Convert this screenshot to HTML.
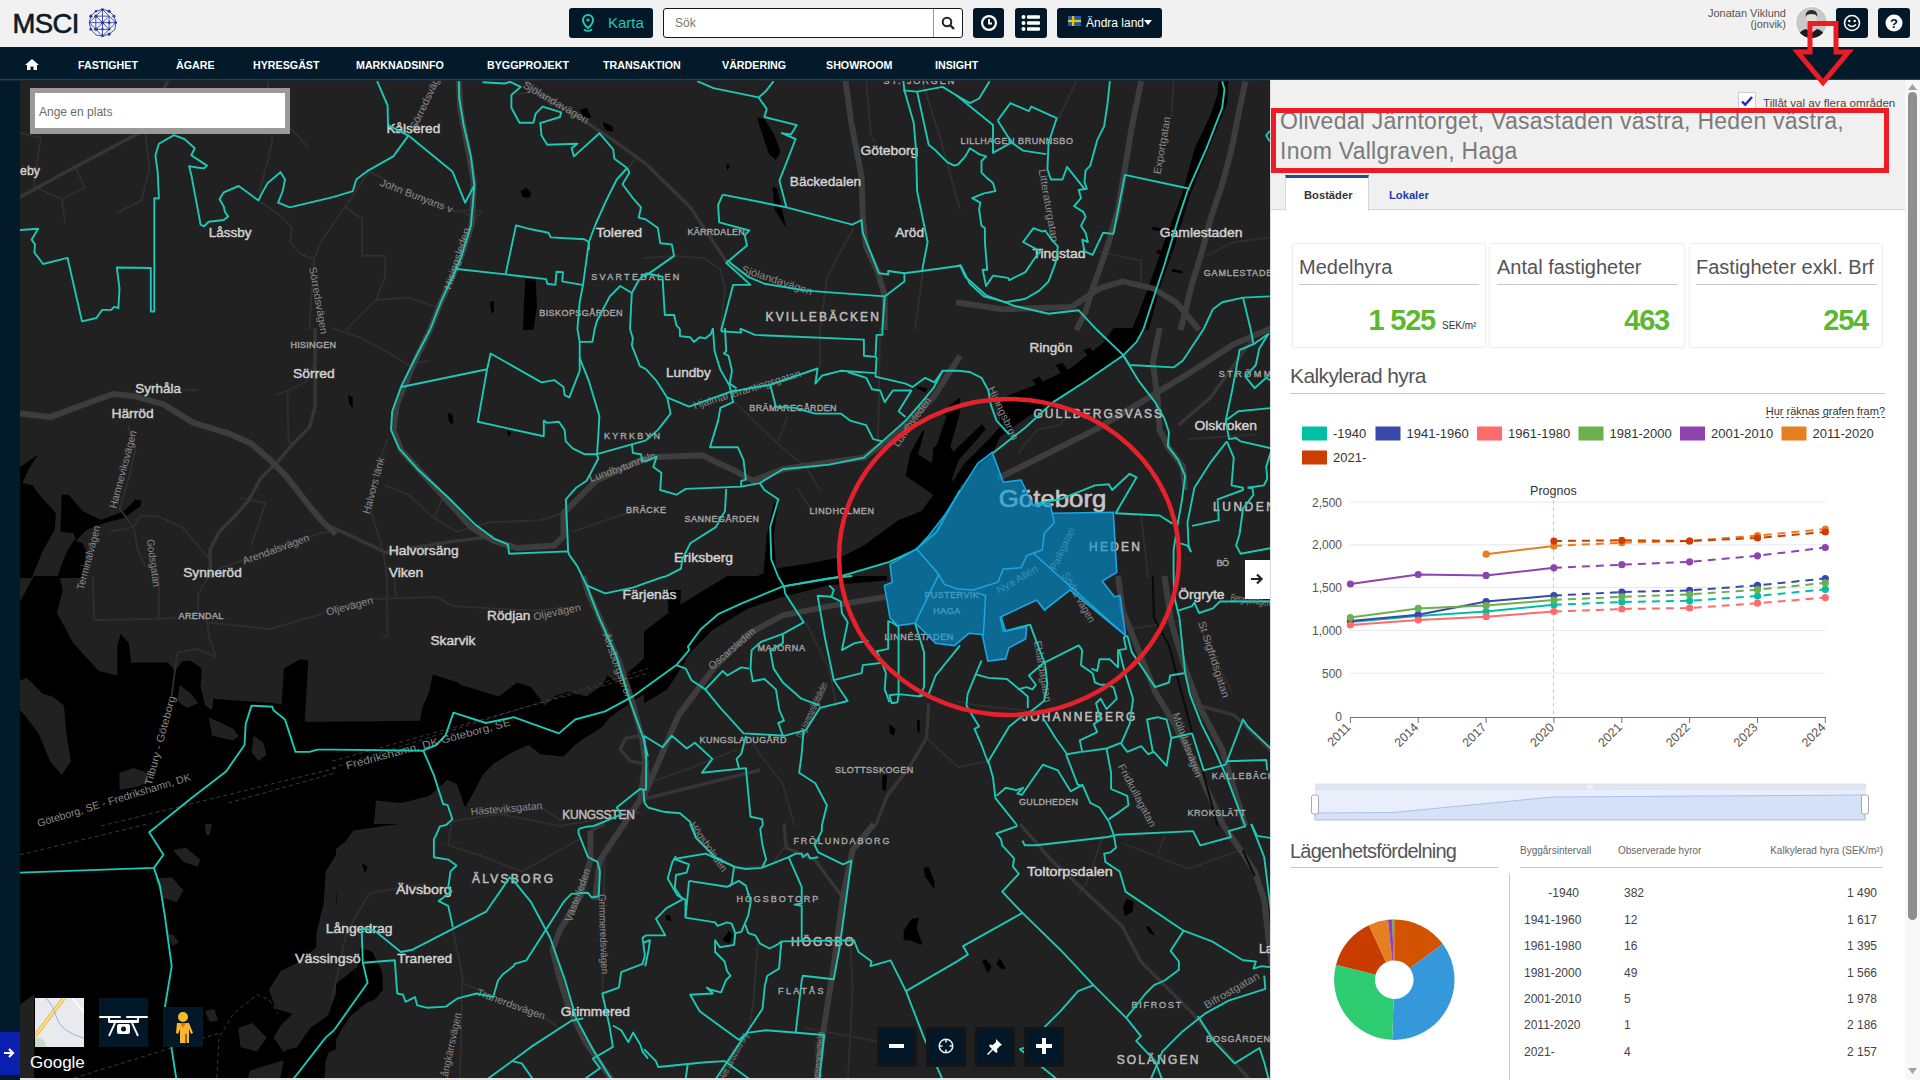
<!DOCTYPE html>
<html><head><meta charset="utf-8">
<style>
*{box-sizing:border-box;margin:0;padding:0}
html,body{width:1920px;height:1080px;overflow:hidden;background:#f1f1f1;font-family:"Liberation Sans",sans-serif}
#hdr{position:absolute;left:0;top:0;width:1920px;height:47px;background:#f1f1f1}
#nav{position:absolute;left:0;top:47px;width:1920px;height:33px;background:#021a2a;border-bottom:1px solid #3b3b3b}
#nav span{position:absolute;top:11.5px;color:#fff;font-weight:bold;font-size:10.7px;letter-spacing:0}
#strip{position:absolute;left:0;top:80px;width:20px;height:1000px;background:#021a2a}
#map{position:absolute;left:20px;top:80px;width:1250px;height:1000px;background:#212121;overflow:hidden}
#panel{position:absolute;left:1270px;top:80px;width:650px;height:1000px;background:#fff;overflow:hidden}
.abs{position:absolute}
.btn{position:absolute;background:#021828;border-radius:3px}

.card{background:#fff;box-shadow:0 0 2px rgba(0,0,0,0.25);border-radius:1px}
.ct{font-size:20px;color:#555}
.cv{font-size:29px;font-weight:bold;color:#5cb82e;letter-spacing:-1.2px}
.th{font-size:10px;color:#666}
.td{font-size:12px;color:#444}
</style></head><body>
<div id="hdr">
  <svg class="abs" style="left:0;top:0" width="130" height="47" viewBox="0 0 130 47"><text x="12.5" y="32.8" font-family="Liberation Sans" font-size="27.5" fill="#0e1a28" stroke="#0e1a28" stroke-width="0.6" textLength="67" lengthAdjust="spacing">MSCI</text>
</svg><svg class="abs" style="left:84px;top:4px" width="38" height="38" viewBox="0 0 1080 1080"><g fill="none" stroke="#3848a8" stroke-width="26" stroke-linejoin="round">
<polygon points="525,150 715,200 855,345 905,530 880,720 715,860 525,910 340,880 195,720 150,530 195,345 340,205"/>
<polygon points="525,155 905,530 525,910 150,530"/>
<path d="M525 155V910M150 530H905M335 345V720M715 345V720M335 345H715M335 720H715M340 345L715 720M715 345L340 720"/></g>
<g fill="#2a3a9c"><circle cx="525" cy="160" r="40"/><circle cx="340" cy="205" r="35"/><circle cx="715" cy="205" r="45"/><circle cx="195" cy="345" r="45"/><circle cx="340" cy="345" r="45"/><circle cx="850" cy="345" r="40"/><circle cx="525" cy="530" r="50"/><circle cx="715" cy="530" r="40"/><circle cx="900" cy="530" r="40"/><circle cx="195" cy="720" r="40"/><circle cx="340" cy="720" r="50"/><circle cx="525" cy="720" r="35"/><circle cx="715" cy="720" r="35"/><circle cx="715" cy="855" r="45"/><circle cx="525" cy="905" r="40"/></g></svg>
  <div class="btn" style="left:569px;top:8px;width:84px;height:30px"></div>
  <svg class="abs" style="left:582px;top:14px" width="12" height="19" viewBox="0 0 12 19"><path d="M6 1a5 5 0 0 0-5 5c0 4 5 8 5 8s5-4 5-8a5 5 0 0 0-5-5z" fill="none" stroke="#1ec8b4" stroke-width="2"/><circle cx="6" cy="6" r="1.6" fill="#1ec8b4"/><path d="M2 15.5q4 3 8 0" fill="none" stroke="#1ec8b4" stroke-width="1.6"/></svg>
  <div class="abs" style="left:608px;top:14px;font-size:15px;color:#1ec8b4">Karta</div>
  <div class="abs" style="left:663px;top:8px;width:300px;height:30px;background:#fff;border:1px solid #1a1a1a;border-radius:3px"></div>
  <div class="abs" style="left:933px;top:9px;width:1px;height:28px;background:#999"></div>
  <div class="abs" style="left:675px;top:16px;font-size:12px;color:#777">Sök</div>
  <svg class="abs" style="left:941px;top:16px" width="14" height="14" viewBox="0 0 14 14"><circle cx="6" cy="6" r="4.3" fill="none" stroke="#222" stroke-width="2"/><path d="M9 9l4 4" stroke="#222" stroke-width="2.4"/></svg>
  <div class="btn" style="left:973px;top:8px;width:31px;height:30px"></div>
  <svg class="abs" style="left:979px;top:13px" width="20" height="20" viewBox="0 0 20 20"><circle cx="10" cy="10" r="8" fill="#fff"/><circle cx="10" cy="10" r="5.8" fill="#021828"/><path d="M10 6v4.5h3" stroke="#fff" stroke-width="1.8" fill="none"/></svg>
  <div class="btn" style="left:1015px;top:8px;width:32px;height:30px"></div>
  <svg class="abs" style="left:1021px;top:14px" width="20" height="18" viewBox="0 0 20 18"><g fill="#fff"><circle cx="2.5" cy="3" r="2"/><circle cx="2.5" cy="9" r="2"/><circle cx="2.5" cy="15" r="2"/><rect x="6" y="1.3" width="13" height="3.4" rx="1"/><rect x="6" y="7.3" width="13" height="3.4" rx="1"/><rect x="6" y="13.3" width="13" height="3.4" rx="1"/></g></svg>
  <div class="btn" style="left:1057px;top:8px;width:105px;height:30px"></div>
  <svg class="abs" style="left:1068px;top:16px" width="13" height="10" viewBox="0 0 13 10"><rect width="13" height="10" fill="#1b5fa8"/><rect x="4" width="2.2" height="10" fill="#f5c400"/><rect y="3.9" width="13" height="2.2" fill="#f5c400"/></svg>
  <div class="abs" style="left:1086px;top:16px;font-size:12px;color:#fff">Ändra land</div>
  <svg class="abs" style="left:1144px;top:20px" width="8" height="5" viewBox="0 0 8 5"><path d="M0 0h8L4 5z" fill="#fff"/></svg>
  <div class="abs" style="left:1600px;top:8px;width:186px;text-align:right;font-size:11px;color:#555;line-height:11px">Jonatan Viklund<br>(jonvik)</div>
  <svg class="abs" style="left:1794px;top:5px" width="35" height="35" viewBox="0 0 35 35"><defs><clipPath id="avc"><circle cx="17.5" cy="17.5" r="15.5"/></clipPath></defs><circle cx="17.5" cy="17.5" r="17" fill="#fafafa"/><g clip-path="url(#avc)"><rect width="35" height="35" fill="#c9c9c9"/><ellipse cx="17.5" cy="14" rx="5.5" ry="7" fill="#e0dcd8"/><path d="M11.5 12q0-7 6-7t6 7q-1-3-6-3t-6 3z" fill="#2a2a2a"/><path d="M3 35q2-10 9-11l5.5 4 5.5-4q7 1 9 11z" fill="#1c1c1c"/><path d="M15 24l2.5 5 2.5-5z" fill="#f0f0f0"/></g></svg>
  <div class="btn" style="left:1836px;top:8px;width:32px;height:30px"></div>
  <svg class="abs" style="left:1843px;top:14px" width="18" height="18" viewBox="0 0 18 18"><circle cx="9" cy="9" r="7.5" fill="none" stroke="#fff" stroke-width="1.6"/><circle cx="6.3" cy="7" r="1.2" fill="#fff"/><circle cx="11.7" cy="7" r="1.2" fill="#fff"/><path d="M5 10.5q4 4 8 0" fill="none" stroke="#fff" stroke-width="1.5"/></svg>
  <div class="btn" style="left:1878px;top:8px;width:32px;height:30px"></div>
  <svg class="abs" style="left:1885px;top:14px" width="18" height="18" viewBox="0 0 18 18"><circle cx="9" cy="9" r="8.5" fill="#fff"/><text x="9" y="14" font-family="Liberation Sans" font-weight="bold" font-size="13" text-anchor="middle" fill="#021828">?</text></svg>
</div>
<div id="nav">
  <svg class="abs" style="left:25px;top:12px" width="14" height="11" viewBox="0 0 14 11"><path d="M7 0L0 6h2v5h3.5V7.5h3V11H12V6h2z" fill="#fff"/></svg>
  <span style="left:78px">FASTIGHET</span>
  <span style="left:176px">ÄGARE</span>
  <span style="left:253px">HYRESGÄST</span>
  <span style="left:356px">MARKNADSINFO</span>
  <span style="left:487px">BYGGPROJEKT</span>
  <span style="left:603px">TRANSAKTION</span>
  <span style="left:722px">VÄRDERING</span>
  <span style="left:826px">SHOWROOM</span>
  <span style="left:935px">INSIGHT</span>
</div>
<div id="strip"></div>
<div class="abs" style="left:0;top:80px;width:1270px;height:1px;background:#1c2832;z-index:5"></div>
<div class="abs" style="left:0;top:1032px;width:20px;height:43px;background:#0a1fb0"></div>
<svg class="abs" style="left:3px;top:1047px" width="13" height="12" viewBox="0 0 13 12"><path d="M1 6h9M6 2l4 4-4 4" fill="none" stroke="#fff" stroke-width="2.2"/></svg>
<div id="map">
<svg class="abs" style="left:0;top:0" width="1250" height="1000" viewBox="0 0 1250 1000">
<rect width="1250" height="1000" fill="#212121"/>
<polygon points="500.7,111.1 506.4,107.6 511.5,113.4 508.8,118.1 502.3,116.9" fill="#000"/>
<polygon points="505.3,199.1 515.7,199.1 516.9,226.9 513.4,250.0 503.0,250.0 504.1,222.2" fill="#000"/>
<polygon points="469.4,222.2 474.0,221.1 474.0,231.5 471.7,233.8" fill="#000"/>
<polygon points="559.7,30.1 566.6,27.8 571.3,37.0 564.3,39.4" fill="#000"/>
<polygon points="582.8,41.7 592.1,46.3 593.2,52.1 585.1,49.8" fill="#000"/>
<polygon points="737.4,37.0 744.4,39.4 753.6,53.2 760.6,71.8 755.9,79.9 749.0,74.1 739.7,46.3" fill="#000"/>
<polygon points="706.2,84.5 710.1,85.2 707.3,90.7" fill="#000"/>
<polygon points="752.5,106.5 757.1,108.8 766.4,148.1 760.6,138.9 754.8,129.6" fill="#000"/>
<polygon points="1198.7,1.2 1208.0,1.2 1207.3,23.1 1188.3,69.4 1169.8,115.7 1155.9,162.0 1139.7,208.3 1128.6,250.0 1111.9,250.0 1128.1,208.3 1144.3,162.0 1161.7,115.7 1174.4,69.4 1190.6,34.7 1197.6,13.9" fill="#000"/>
<polygon points="1132.8,147.0 1140.9,148.1 1140.2,150.9 1132.3,150.0" fill="#000"/>
<polygon points="1136.9,170.1 1145.5,171.8 1144.8,174.8 1136.5,173.6" fill="#000"/>
<polygon points="1152.4,188.7 1162.4,191.0 1161.7,193.3 1151.7,191.7" fill="#000"/>
<polygon points="0.0,386.9 18.5,374.2 9.3,388.0 2.3,403.1 12.7,405.4 17.4,412.4 35.9,433.2 34.7,449.4 23.1,470.2 11.6,498.0 0.0,498.0" fill="#000"/>
<polygon points="41.7,414.7 48.6,414.7 62.5,430.9 81.0,440.1 104.2,430.9 115.7,419.3 121.5,420.5 120.4,426.2 104.2,437.8 83.3,443.6 67.1,449.4 55.6,461.0 62.5,463.3 66.0,470.2 62.5,498.0 37.0,498.0 41.7,484.1 48.6,467.9 55.6,458.6 53.2,452.9 40.5,451.7" fill="#000"/>
<polygon points="328.2,315.1 332.8,317.4 332.8,327.9 329.4,324.4" fill="#000"/>
<polygon points="427.7,332.5 432.4,334.8 433.5,345.2 428.9,341.8" fill="#000"/>
<polygon points="486.8,351.0 491.4,352.2 489.1,357.3" fill="#000"/>
<polygon points="732.8,498.0 753.6,488.7 786.0,484.1 820.8,477.2 843.9,465.6 878.6,440.1 901.8,430.9 913.4,414.7 885.6,396.1 890.2,373.0 901.8,352.2 922.6,331.3 940.0,317.4 940.0,410.0 916.8,451.7 894.8,470.2 869.4,481.8 820.8,498.0" fill="#000"/>
<polygon points="753.6,423.9 758.3,420.5 753.6,456.3 757.1,498.0 743.2,498.0 746.7,456.3" fill="#000"/>
<polygon points="893.7,305.9 907.6,308.2 905.2,312.8" fill="#000"/>
<polygon points="936.0,336.0 959.1,329.0 989.2,315.1 1019.3,303.6 1051.7,287.4 1084.1,261.9 1093.4,248.0 1125.8,248.0 1116.6,264.2 1102.7,275.8 1074.9,294.3 1040.2,317.4 1005.4,338.3 980.0,356.8 973.0,373.0 936.0,410.0" fill="#000"/>
<polygon points="1012.4,300.1 1019.3,296.6 1027.4,308.2 1021.6,311.7" fill="#000"/>
<polygon points="1035.5,285.0 1042.5,282.7 1051.7,296.6 1044.8,298.9" fill="#000"/>
<polygon points="1063.3,270.0 1070.3,267.7 1078.4,279.2 1072.6,281.6" fill="#000"/>
<polygon points="0.0,521.5 13.9,496.0 39.4,496.0 42.8,509.9 37.0,533.0 53.2,563.1 78.7,590.9 97.2,595.5 97.2,565.4 100.7,553.9 108.8,563.1 111.1,582.8 148.1,582.8 155.1,590.9 162.0,581.6 170.1,580.5 181.7,588.6 180.6,607.1 185.2,625.6 192.1,630.3 193.3,618.7 254.6,623.3 261.6,624.5 263.9,588.6 280.1,579.3 288.2,580.5 284.7,641.8 316.0,641.8 316.0,746.0 0.0,746.0" fill="#000"/>
<polygon points="312.0,641.8 400.0,640.7 402.3,627.9 409.2,611.7 412.7,594.4 438.2,602.5 440.5,604.8 478.7,616.4 497.2,602.5 511.1,607.1 525.0,625.6 534.2,616.4 548.1,611.7 566.6,616.4 582.8,604.8 587.5,595.5 596.7,602.5 612.9,588.6 628.0,574.7 628.0,611.7 612.9,621.0 589.8,637.2 582.8,646.5 557.4,662.7 543.5,676.6 520.3,674.2 508.8,665.0 492.6,671.9 474.0,683.5 462.5,695.1 455.5,709.0 445.1,727.5 437.0,704.3 427.7,699.7 409.2,715.9 381.4,722.9 356.0,720.5 353.7,746.0 312.0,746.0" fill="#000"/>
<polygon points="624.0,551.6 654.1,528.4 684.2,509.9 707.3,496.0 867.1,496.0 867.1,500.6 809.2,505.3 762.9,516.8 728.2,528.4 693.4,549.2 670.3,572.4 656.4,595.5 647.1,609.4 624.0,623.3" fill="#000"/>
<polygon points="647.1,509.9 661.0,509.9 658.7,551.6 649.5,551.6" fill="#000"/>
<polygon points="869.4,644.1 875.2,648.8 874.0,655.7 869.8,653.4" fill="#000"/>
<polygon points="862.4,695.1 867.1,695.1 865.9,711.3 862.0,709.0" fill="#000"/>
<polygon points="897.1,639.5 899.9,640.7 899.5,653.4 897.1,651.1" fill="#000"/>
<polygon points="0.0,744.0 316.0,744.0 316.0,1000.0 0.0,1000.0" fill="#000"/>
<polygon points="312.0,744.0 378.4,744.0 333.3,750.6 325.0,761.8 312.0,772.4" fill="#000"/>
<polygon points="312.0,805.6 316.7,815.1 315.6,838.8 312.0,841.2" fill="#000"/>
<polygon points="340.4,867.3 352.3,872.0 361.8,891.0 363.0,910.0 354.7,919.4 342.8,924.2 326.2,933.7 312.0,952.6 312.0,907.6 326.2,895.7 338.1,886.2" fill="#000"/>
<polygon points="341.6,783.1 347.6,786.7 345.2,793.8" fill="#000"/>
<polygon points="903.8,787.9 908.5,786.7 914.4,800.9 914.4,809.2 904.9,796.2" fill="#000"/>
<polygon points="883.6,850.7 891.9,838.8 899.0,837.6 896.6,848.3 902.6,864.9 889.5,860.2 883.6,860.2" fill="#000"/>
<polygon points="645.3,835.3 650.1,835.3 651.3,841.2 646.5,840.0" fill="#000"/>
<polygon points="702.2,860.2 709.3,850.7 712.9,855.4 709.3,863.7" fill="#000"/>
<polygon points="1103.1,827.0 1106.7,818.7 1113.8,822.2 1112.6,831.7 1104.8,836.5" fill="#000"/>
<polygon points="1125.7,845.9 1129.2,846.4 1135.1,855.4 1129.2,853.1" fill="#000"/>
<polygon points="962.1,881.5 965.6,879.1 971.6,886.2 968.0,893.4" fill="#000"/>
<polygon points="976.3,883.9 979.9,877.9 985.8,888.6 982.2,889.8" fill="#000"/>
<polygon points="0.0,600.2 6.9,597.9 23.1,614.1 32.4,616.4 44.0,625.6 46.3,653.4 50.9,681.2 41.7,695.1 30.1,681.2 18.5,653.4 4.6,634.9 0.0,630.3" fill="#212121"/>
<polygon points="159.7,604.8 171.3,614.1 178.2,623.3 166.7,627.9 157.4,621.0" fill="#212121"/>
<polygon points="188.7,637.2 196.8,640.7 213.0,648.8 218.7,655.7 213.0,660.4 192.1,655.7" fill="#212121"/>
<polygon points="233.8,655.7 243.1,662.7 246.5,674.2 238.4,681.2 231.5,671.9" fill="#212121"/>
<polygon points="99.5,692.8 113.4,688.1 127.3,692.8 128.5,702.0 118.1,706.6 99.5,710.1" fill="#212121"/>
<polygon points="152.9,770.1 166.0,767.7 180.2,779.6 177.8,786.7 163.6,781.9" fill="#212121"/>
<polygon points="135.1,798.5 151.7,797.3 163.6,810.4 156.5,822.2 142.2,817.5" fill="#212121"/>
<polygon points="147.0,853.1 154.1,855.4 158.8,862.5 152.9,866.1" fill="#212121"/>
<polygon points="184.9,931.3 194.4,928.9 198.0,940.8 189.7,942.0" fill="#212121"/>
<polygon points="218.1,947.9 232.3,943.1 246.6,957.4 237.1,971.6 220.5,966.9" fill="#212121"/>
<polygon points="184.9,744.0 192.0,744.0 189.7,754.7 186.1,754.7" fill="#212121"/>
<polygon points="316.0,774.8 305.8,791.4 303.5,824.6 296.3,853.1 296.3,867.3 279.8,881.5 260.8,891.0 248.9,910.0 256.0,928.9 272.6,933.7 260.8,945.5 253.7,957.4 263.2,971.6 282.1,974.0 296.3,957.4 308.2,952.6 316.0,945.5" fill="#212121"/>
<polygon points="230.0,990.6 260.8,981.1 284.5,983.4 316.0,969.2 316.0,1000.0 227.6,1000.0" fill="#212121"/>
<polygon points="0.0,924.2 14.2,914.7 14.2,1000.0 0.0,1000.0" fill="#212121"/>
<polygon points="910.0,330.2 926.7,335.7 916.5,365.4 913.2,368.1 911.9,383.0 898.0,374.6" fill="#212121"/>
<polygon points="940.6,330.2 940.6,320.0 980.0,320.0 980.0,346.9 969.3,358.9 943.3,384.8 933.1,401.5 931.8,399.6 938.7,380.2 965.6,349.6 961.9,344.1 933.1,371.9 930.4,366.3" fill="#212121"/>
<polygon points="317.4,910.0 307.9,935.7 290.3,947.9 276.8,967.5 266.0,970.0 260.0,1000.0 304.0,1000.0 305.9,980.0 310.6,967.5 329.6,937.0 360.7,910.0 363.0,895.0 340.0,910.0" fill="#000"/>
<polyline points="13.9,106.5 41.7,119.2 45.1,143.5" fill="none" stroke="#2f2f2f" stroke-width="1.8" stroke-linejoin="round"/>
<polyline points="55.6,88.0 64.8,107.6 41.7,119.2" fill="none" stroke="#2f2f2f" stroke-width="1.8" stroke-linejoin="round"/>
<polyline points="93.8,134.3 121.5,120.4 129.6,88.0 125.0,49.8" fill="none" stroke="#2f2f2f" stroke-width="1.8" stroke-linejoin="round"/>
<polyline points="247.7,0.0 252.3,60.2 248.8,76.4 240.7,106.5 239.6,121.5 261.6,136.6 272.0,148.1 269.7,162.0 280.1,173.6 294.0,179.4 300.9,162.0 314.0,142.4" fill="none" stroke="#2f2f2f" stroke-width="1.8" stroke-linejoin="round"/>
<polyline points="294.0,179.4 289.4,250.0" fill="none" stroke="#2f2f2f" stroke-width="1.8" stroke-linejoin="round"/>
<polyline points="270.8,48.6 288.2,67.1" fill="none" stroke="#2f2f2f" stroke-width="1.8" stroke-linejoin="round"/>
<polyline points="0.0,53.2 20.8,57.9 13.9,106.5" fill="none" stroke="#2f2f2f" stroke-width="1.8" stroke-linejoin="round"/>
<polyline points="349.0,91.4 381.4,108.8 437.0,131.9 450.9,129.6 462.5,131.9 453.2,138.9 441.6,129.6" fill="none" stroke="#2f2f2f" stroke-width="1.8" stroke-linejoin="round"/>
<polyline points="314.0,142.4 332.8,115.7 349.0,91.4" fill="none" stroke="#2f2f2f" stroke-width="1.8" stroke-linejoin="round"/>
<polyline points="418.5,0.0 400.0,39.4 381.4,64.8" fill="none" stroke="#2f2f2f" stroke-width="1.8" stroke-linejoin="round"/>
<polyline points="325.9,127.3 342.1,138.9 342.1,175.9 365.2,175.9 365.2,196.8 356.0,219.9 325.9,250.0" fill="none" stroke="#2f2f2f" stroke-width="1.8" stroke-linejoin="round"/>
<polyline points="356.0,219.9 388.4,217.6 416.2,226.9 432.4,196.8" fill="none" stroke="#2f2f2f" stroke-width="1.8" stroke-linejoin="round"/>
<polyline points="615.2,78.7 601.4,97.2" fill="none" stroke="#2f2f2f" stroke-width="1.8" stroke-linejoin="round"/>
<polyline points="497.2,13.9 515.7,11.6 531.9,25.5" fill="none" stroke="#2f2f2f" stroke-width="1.8" stroke-linejoin="round"/>
<polyline points="833.5,148.1 818.4,175.9 806.9,199.1 799.9,249.0" fill="none" stroke="#2f2f2f" stroke-width="1.8" stroke-linejoin="round"/>
<polyline points="902.9,192.1 894.8,250.0" fill="none" stroke="#2f2f2f" stroke-width="1.8" stroke-linejoin="round"/>
<polyline points="624.0,178.2 654.1,175.9 684.2,178.2 700.4,189.8 705.0,208.3 700.4,250.0" fill="none" stroke="#2f2f2f" stroke-width="1.8" stroke-linejoin="round"/>
<polyline points="846.2,0.0 850.9,55.6 855.5,62.5" fill="none" stroke="#2f2f2f" stroke-width="1.8" stroke-linejoin="round"/>
<polyline points="901.8,0.0 920.3,57.9 940.0,129.6" fill="none" stroke="#2f2f2f" stroke-width="1.8" stroke-linejoin="round"/>
<polyline points="1056.4,1.2 1037.9,39.4" fill="none" stroke="#2f2f2f" stroke-width="1.8" stroke-linejoin="round"/>
<polyline points="1153.6,1.2 1151.3,37.0" fill="none" stroke="#2f2f2f" stroke-width="1.8" stroke-linejoin="round"/>
<polyline points="1079.5,171.3 1098.0,175.9 1121.2,180.6 1121.2,203.7" fill="none" stroke="#2f2f2f" stroke-width="1.8" stroke-linejoin="round"/>
<polyline points="1181.4,178.2 1213.8,162.0 1249.7,157.4" fill="none" stroke="#2f2f2f" stroke-width="1.8" stroke-linejoin="round"/>
<polyline points="107.6,345.2 115.7,368.4 108.8,398.5 99.5,428.6 113.4,447.1 118.1,470.2 125.0,486.4" fill="none" stroke="#2f2f2f" stroke-width="1.8" stroke-linejoin="round"/>
<polyline points="90.3,451.7 113.4,447.1 120.4,435.5 138.9,436.7 162.0,447.1 189.8,479.5" fill="none" stroke="#2f2f2f" stroke-width="1.8" stroke-linejoin="round"/>
<polyline points="254.6,315.1 268.5,310.5 287.0,301.2 294.0,282.7" fill="none" stroke="#2f2f2f" stroke-width="1.8" stroke-linejoin="round"/>
<polyline points="267.4,310.5 268.5,361.4 273.1,363.7" fill="none" stroke="#2f2f2f" stroke-width="1.8" stroke-linejoin="round"/>
<polyline points="219.9,418.1 245.4,422.8 231.5,465.6" fill="none" stroke="#2f2f2f" stroke-width="1.8" stroke-linejoin="round"/>
<polyline points="199.1,488.7 300.9,452.9 316.0,451.7" fill="none" stroke="#2f2f2f" stroke-width="1.8" stroke-linejoin="round"/>
<polyline points="162.0,310.5 178.2,310.0" fill="none" stroke="#2f2f2f" stroke-width="1.8" stroke-linejoin="round"/>
<polyline points="312.0,248.0 339.8,257.3 369.9,273.5 388.4,285.0 409.2,280.4" fill="none" stroke="#2f2f2f" stroke-width="1.8" stroke-linejoin="round"/>
<polyline points="367.6,359.1 353.7,398.5 351.4,433.2 362.9,470.2 367.0,497.0" fill="none" stroke="#2f2f2f" stroke-width="1.8" stroke-linejoin="round"/>
<polyline points="365.2,405.4 388.4,414.7 413.9,437.8" fill="none" stroke="#2f2f2f" stroke-width="1.8" stroke-linejoin="round"/>
<polyline points="423.1,417.0 413.9,437.8 437.0,451.7 469.4,442.4 520.3,440.1 543.5,433.2" fill="none" stroke="#2f2f2f" stroke-width="1.8" stroke-linejoin="round"/>
<polyline points="552.7,451.7 599.0,435.5 628.0,428.6" fill="none" stroke="#2f2f2f" stroke-width="1.8" stroke-linejoin="round"/>
<polyline points="709.6,317.4 762.9,368.4 786.0,386.9 799.9,410.0" fill="none" stroke="#2f2f2f" stroke-width="1.8" stroke-linejoin="round"/>
<polyline points="767.5,336.0 758.3,361.4" fill="none" stroke="#2f2f2f" stroke-width="1.8" stroke-linejoin="round"/>
<polyline points="799.9,249.0 799.9,287.4" fill="none" stroke="#2f2f2f" stroke-width="1.8" stroke-linejoin="round"/>
<polyline points="776.8,407.7 790.7,428.6 809.2,433.2" fill="none" stroke="#2f2f2f" stroke-width="1.8" stroke-linejoin="round"/>
<polyline points="860.1,248.0 857.8,373.0" fill="none" stroke="#2f2f2f" stroke-width="1.8" stroke-linejoin="round"/>
<polyline points="998.5,373.0 1017.0,349.9 1040.2,345.2 1051.7,329.0" fill="none" stroke="#2f2f2f" stroke-width="1.8" stroke-linejoin="round"/>
<polyline points="1121.2,435.5 1128.1,498.0" fill="none" stroke="#2f2f2f" stroke-width="1.8" stroke-linejoin="round"/>
<polyline points="1167.5,359.1 1236.9,354.5" fill="none" stroke="#2f2f2f" stroke-width="1.8" stroke-linejoin="round"/>
<polyline points="72.9,496.0 74.1,540.0 138.9,538.8 157.4,537.7" fill="none" stroke="#2f2f2f" stroke-width="1.8" stroke-linejoin="round"/>
<polyline points="138.9,496.0 138.9,537.7" fill="none" stroke="#2f2f2f" stroke-width="1.8" stroke-linejoin="round"/>
<polyline points="188.7,496.0 178.2,514.5 178.2,533.0 187.5,542.3 250.0,549.2 300.9,534.2 314.0,528.4" fill="none" stroke="#2f2f2f" stroke-width="1.8" stroke-linejoin="round"/>
<polyline points="187.5,542.3 188.7,556.2 192.1,565.4 195.6,577.0" fill="none" stroke="#2f2f2f" stroke-width="1.8" stroke-linejoin="round"/>
<polyline points="157.4,572.4 178.2,568.9 195.6,577.0" fill="none" stroke="#2f2f2f" stroke-width="1.8" stroke-linejoin="round"/>
<polyline points="157.4,572.4 151.6,616.4" fill="none" stroke="#2f2f2f" stroke-width="1.8" stroke-linejoin="round"/>
<polyline points="314.0,528.4 351.4,519.1 416.2,516.8 432.4,526.1 513.4,530.7 562.0,526.1" fill="none" stroke="#2f2f2f" stroke-width="1.8" stroke-linejoin="round"/>
<polyline points="367.0,497.0 367.6,556.2 361.8,557.3" fill="none" stroke="#2f2f2f" stroke-width="1.8" stroke-linejoin="round"/>
<polyline points="374.5,496.0 375.7,516.8" fill="none" stroke="#2f2f2f" stroke-width="1.8" stroke-linejoin="round"/>
<polyline points="431.5,741.5 520.3,727.5 543.5,741.4" fill="none" stroke="#2f2f2f" stroke-width="1.8" stroke-linejoin="round"/>
<polyline points="786.0,542.3 809.2,588.6 816.1,625.6" fill="none" stroke="#2f2f2f" stroke-width="1.8" stroke-linejoin="round"/>
<polyline points="624.0,704.3 670.3,688.1 716.6,669.6" fill="none" stroke="#2f2f2f" stroke-width="1.8" stroke-linejoin="round"/>
<polyline points="728.2,658.0 762.9,704.3 774.5,746.0" fill="none" stroke="#2f2f2f" stroke-width="1.8" stroke-linejoin="round"/>
<polyline points="906.4,658.0 938.0,687.0" fill="none" stroke="#2f2f2f" stroke-width="1.8" stroke-linejoin="round"/>
<polyline points="1107.3,549.2 1139.7,544.6 1165.2,540.0" fill="none" stroke="#2f2f2f" stroke-width="1.8" stroke-linejoin="round"/>
<polyline points="1211.5,611.7 1202.2,593.2 1190.6,565.4 1176.7,542.3" fill="none" stroke="#2f2f2f" stroke-width="1.8" stroke-linejoin="round"/>
<polyline points="938.0,687.0 968.4,681.2" fill="none" stroke="#2f2f2f" stroke-width="1.8" stroke-linejoin="round"/>
<polyline points="936.0,621.0 959.1,625.6 1005.4,630.3" fill="none" stroke="#2f2f2f" stroke-width="1.8" stroke-linejoin="round"/>
<polyline points="431.5,741.5 428.2,765.3 459.0,774.8 482.7,784.3 501.7,791.4 560.9,758.2" fill="none" stroke="#2f2f2f" stroke-width="1.8" stroke-linejoin="round"/>
<polyline points="430.5,838.8 442.4,895.7 440.0,1000.0" fill="none" stroke="#2f2f2f" stroke-width="1.8" stroke-linejoin="round"/>
<polyline points="442.4,902.8 525.4,938.4 539.6,947.9 551.4,940.8" fill="none" stroke="#2f2f2f" stroke-width="1.8" stroke-linejoin="round"/>
<polyline points="584.6,779.6 582.3,921.8" fill="none" stroke="#2f2f2f" stroke-width="1.8" stroke-linejoin="round"/>
<polyline points="312.0,919.4 326.2,853.1 349.9,812.8 406.8,803.3" fill="none" stroke="#2f2f2f" stroke-width="1.8" stroke-linejoin="round"/>
<polyline points="714.1,789.0 752.0,784.3 763.9,767.7" fill="none" stroke="#2f2f2f" stroke-width="1.8" stroke-linejoin="round"/>
<polyline points="737.8,862.5 733.1,924.2 728.3,952.6" fill="none" stroke="#2f2f2f" stroke-width="1.8" stroke-linejoin="round"/>
<polyline points="830.3,862.5 832.6,910.0 827.9,1000.0" fill="none" stroke="#2f2f2f" stroke-width="1.8" stroke-linejoin="round"/>
<polyline points="785.2,947.9 861.1,962.1 894.3,971.6" fill="none" stroke="#2f2f2f" stroke-width="1.8" stroke-linejoin="round"/>
<polyline points="1083.0,755.9 1066.4,803.3 1059.3,812.8" fill="none" stroke="#2f2f2f" stroke-width="1.8" stroke-linejoin="round"/>
<polyline points="1102.0,763.0 1168.3,789.0 1220.5,770.1" fill="none" stroke="#2f2f2f" stroke-width="1.8" stroke-linejoin="round"/>
<polyline points="1144.6,755.9 1137.5,774.8" fill="none" stroke="#2f2f2f" stroke-width="1.8" stroke-linejoin="round"/>
<polyline points="460.0,730.0 540.0,746.0 620.0,732.0" fill="none" stroke="#2f2f2f" stroke-width="1.8" stroke-linejoin="round"/>
<polyline points="0.0,116.9 55.6,86.8 125.0,49.8 148.1,0.0" fill="none" stroke="#363636" stroke-width="3.4" stroke-linejoin="round"/>
<polyline points="504.1,0.0 520.3,13.9 562.0,39.4 589.8,57.9 626.0,83.9" fill="none" stroke="#363636" stroke-width="3.4" stroke-linejoin="round"/>
<polyline points="626.0,83.9 670.3,127.3 707.3,182.9 723.5,196.8" fill="none" stroke="#363636" stroke-width="3.4" stroke-linejoin="round"/>
<polyline points="295.1,248.0 295.1,326.7 289.4,347.5 273.1,363.7 256.9,382.3 240.7,398.5 229.2,419.3 217.6,433.2 199.1,451.7 189.8,470.2 191.0,498.0" fill="none" stroke="#363636" stroke-width="3.4" stroke-linejoin="round"/>
<polyline points="312.0,447.1 346.7,463.3 365.2,472.5 427.7,462.1 474.0,456.3" fill="none" stroke="#363636" stroke-width="3.4" stroke-linejoin="round"/>
<polyline points="1158.2,345.2 1190.6,317.4 1232.3,259.6" fill="none" stroke="#363636" stroke-width="3.4" stroke-linejoin="round"/>
<polyline points="622.2,655.7 606.0,658.0 600.2,669.6 610.6,681.2 622.2,683.5" fill="none" stroke="#363636" stroke-width="3.4" stroke-linejoin="round"/>
<polyline points="908.7,623.3 906.4,658.0 890.2,685.8 867.1,715.9 855.5,746.0" fill="none" stroke="#363636" stroke-width="3.4" stroke-linejoin="round"/>
<polyline points="1179.1,625.6 1213.8,634.9 1252.0,671.9" fill="none" stroke="#363636" stroke-width="3.4" stroke-linejoin="round"/>
<polyline points="570.4,751.1 584.6,744.0" fill="none" stroke="#363636" stroke-width="3.4" stroke-linejoin="round"/>
<polyline points="763.9,744.0 766.2,767.7 794.7,779.6 820.8,815.1" fill="none" stroke="#363636" stroke-width="3.4" stroke-linejoin="round"/>
<polyline points="1000.0,744.0 1030.8,779.6 1068.8,815.1 1102.0,845.9 1120.9,881.5 1173.1,933.7 1196.8,962.1 1230.0,1000.0" fill="none" stroke="#363636" stroke-width="3.4" stroke-linejoin="round"/>
<polyline points="620.0,720.0 680.0,705.0 740.0,690.0" fill="none" stroke="#363636" stroke-width="3.4" stroke-linejoin="round"/>
<polyline points="438.9,0.0 440.5,30.1 448.6,71.8 453.7,101.9 452.0,143.5 441.6,175.9 432.4,196.8 420.8,222.2 410.4,249.0" fill="none" stroke="#3d3d3d" stroke-width="6" stroke-linejoin="round"/>
<polyline points="825.4,0.0 831.2,41.7 841.6,97.2 842.8,138.9 846.2,166.7 857.8,192.1 864.7,215.3 864.7,250.0" fill="none" stroke="#3d3d3d" stroke-width="6" stroke-linejoin="round"/>
<polyline points="1121.2,1.2 1111.9,46.3 1105.0,88.0 1098.0,129.6 1088.8,162.0 1079.5,189.8 1072.6,208.3 1065.6,231.5 1056.4,250.0" fill="none" stroke="#3d3d3d" stroke-width="6" stroke-linejoin="round"/>
<polyline points="1225.4,1.2 1218.4,34.7 1211.5,69.4 1202.2,104.2 1190.6,138.9 1181.4,173.6 1172.1,203.7 1165.2,231.5 1160.5,250.0" fill="none" stroke="#3d3d3d" stroke-width="6" stroke-linejoin="round"/>
<polyline points="936.0,222.2 982.3,229.2 1051.7,226.9 1079.5,208.3 1102.7,201.4 1132.8,208.3 1155.9,222.2 1179.1,250.0" fill="none" stroke="#3d3d3d" stroke-width="6" stroke-linejoin="round"/>
<polyline points="0.0,333.6 30.1,337.1 57.9,326.7 92.6,314.0 115.7,316.3 143.5,324.4 173.6,342.9 208.3,353.3 231.5,363.7 250.0,379.9 266.2,396.1 289.4,426.2 303.2,442.4 316.0,454.0" fill="none" stroke="#3d3d3d" stroke-width="6" stroke-linejoin="round"/>
<polyline points="410.4,249.0 395.3,280.4 376.8,324.4 373.3,349.9 381.4,370.7 404.6,396.1 430.1,423.9 450.9,447.1 474.0,461.0 497.2,467.9 534.2,465.6 543.5,456.3 543.5,433.2 575.9,400.8 626.0,377.6" fill="none" stroke="#3d3d3d" stroke-width="6" stroke-linejoin="round"/>
<polyline points="626.0,377.6 681.9,375.3 716.6,391.5 732.8,400.8 762.9,389.2 809.2,382.3 843.9,377.6 878.6,352.2 913.4,317.4 940.0,275.8" fill="none" stroke="#3d3d3d" stroke-width="6" stroke-linejoin="round"/>
<polyline points="1139.7,248.0 1132.8,282.7 1137.4,317.4 1139.7,349.9 1149.0,368.4 1162.9,386.9 1165.2,410.0" fill="none" stroke="#3d3d3d" stroke-width="6" stroke-linejoin="round"/>
<polyline points="977.7,398.5 1028.6,373.0 1074.9,349.9 1121.2,322.1 1167.5,294.3 1213.8,264.2 1252.0,248.0" fill="none" stroke="#3d3d3d" stroke-width="6" stroke-linejoin="round"/>
<polyline points="563.2,496.0 568.9,514.5 580.5,540.0 599.0,581.6 610.6,616.4 622.2,658.0 628.0,704.3" fill="none" stroke="#3d3d3d" stroke-width="6" stroke-linejoin="round"/>
<polyline points="624.0,715.9 658.7,634.9 693.4,588.6 728.2,553.9 762.9,535.4 809.2,526.1 867.1,516.8" fill="none" stroke="#3d3d3d" stroke-width="6" stroke-linejoin="round"/>
<polyline points="1098.0,496.0 1102.7,530.7 1116.6,565.4 1135.1,611.7 1155.9,646.5 1179.1,692.8 1203.1,745.0" fill="none" stroke="#3d3d3d" stroke-width="6" stroke-linejoin="round"/>
<polyline points="1144.3,496.0 1151.3,542.3 1165.2,588.6 1179.1,625.6 1202.2,669.6 1225.4,746.0" fill="none" stroke="#3d3d3d" stroke-width="6" stroke-linejoin="round"/>
<polyline points="570.4,751.1 570.4,779.6 560.9,815.1 539.6,850.7 532.5,869.7 539.6,898.1 549.1,928.9 565.7,962.1 591.8,1000.0" fill="none" stroke="#3d3d3d" stroke-width="6" stroke-linejoin="round"/>
<polyline points="854.0,744.0 832.6,770.1 823.1,815.1 813.7,886.2 804.2,945.5 797.1,1000.0" fill="none" stroke="#3d3d3d" stroke-width="6" stroke-linejoin="round"/>
<polyline points="1203.1,745.0 1220.5,770.1 1234.7,791.4 1244.2,819.9 1248.9,862.5 1252.0,886.2" fill="none" stroke="#3d3d3d" stroke-width="6" stroke-linejoin="round"/>
<polyline points="626.0,680.0 620.0,720.0 600.0,750.0 580.0,780.0 575.0,820.0" fill="none" stroke="#3d3d3d" stroke-width="6" stroke-linejoin="round"/>
<polyline points="1132.8,496.0 1133.9,537.7 1149.0,565.4 1158.2,600.2 1167.5,634.9 1197.6,746.0" fill="none" stroke="#0a0a0a" stroke-width="2" stroke-linejoin="round"/>
<polyline points="1222.9,770.1 1234.7,796.2" fill="none" stroke="#0a0a0a" stroke-width="2" stroke-linejoin="round"/>
<polyline points="81.0,746.0 316.0,688.1" fill="none" stroke="#3a3a3a" stroke-width="1" stroke-dasharray="4,3"/>
<polyline points="208.3,722.9 316.0,692.8" fill="none" stroke="#3a3a3a" stroke-width="1" stroke-dasharray="4,3"/>
<polyline points="312.0,688.1 628.0,588.6" fill="none" stroke="#3a3a3a" stroke-width="1" stroke-dasharray="4,3"/>
<polyline points="312.0,681.2 628.0,593.2" fill="none" stroke="#3a3a3a" stroke-width="1" stroke-dasharray="4,3"/>
<polyline points="0.0,774.8 128.0,744.0" fill="none" stroke="#3a3a3a" stroke-width="1" stroke-dasharray="4,3"/>
<polyline points="196.8,997.7 199.1,957.4 213.4,933.7 237.1,914.7 248.9,919.4 258.4,933.7" fill="none" stroke="#3a3a3a" stroke-width="1" stroke-dasharray="4,3"/>
<polyline points="47.4,1000.0 201.5,952.6" fill="none" stroke="#3a3a3a" stroke-width="1" stroke-dasharray="4,3"/>
<g font-family="Liberation Sans"><text x="188.7" y="157.4" font-size="13.5" fill="#d2d2d2" stroke="#d2d2d2" stroke-width="0.45" textLength="42.8" lengthAdjust="spacingAndGlyphs">Låssby</text>
<text x="0.0" y="95.0" font-size="13.5" fill="#d2d2d2" stroke="#d2d2d2" stroke-width="0.45" textLength="20" lengthAdjust="spacingAndGlyphs">eby</text>
<text x="366.4" y="53.2" font-size="13.5" fill="#d2d2d2" stroke="#d2d2d2" stroke-width="0.45" textLength="53.9" lengthAdjust="spacingAndGlyphs">Kålsered</text>
<text x="575.9" y="157.0" font-size="13.5" fill="#d2d2d2" stroke="#d2d2d2" stroke-width="0.45" textLength="46.3" lengthAdjust="spacingAndGlyphs">Tolered</text>
<text x="571.3" y="200.2" font-size="9" fill="#a9a9a9" stroke="#a9a9a9" stroke-width="0.35" textLength="88" lengthAdjust="spacing">SVARTEDALEN</text>
<text x="519.2" y="236.1" font-size="9" fill="#a9a9a9" stroke="#a9a9a9" stroke-width="0.35" textLength="83.3" lengthAdjust="spacing">BISKOPSGÅRDEN</text>
<text x="769.8" y="106.0" font-size="13.5" fill="#d2d2d2" stroke="#d2d2d2" stroke-width="0.45" textLength="71.3" lengthAdjust="spacingAndGlyphs">Bäckedalen</text>
<text x="840.4" y="74.5" font-size="13.5" fill="#d2d2d2" stroke="#d2d2d2" stroke-width="0.45" textLength="57.9" lengthAdjust="spacingAndGlyphs">Göteborg</text>
<text x="875.2" y="157.0" font-size="13.5" fill="#d2d2d2" stroke="#d2d2d2" stroke-width="0.45" textLength="28.9" lengthAdjust="spacingAndGlyphs">Aröd</text>
<text x="667.5" y="154.6" font-size="9" fill="#a9a9a9" stroke="#a9a9a9" stroke-width="0.35" textLength="57.2" lengthAdjust="spacing">KÄRRDALEN</text>
<text x="745.5" y="241.2" font-size="12" fill="#bdbdbd" stroke="#bdbdbd" stroke-width="0.5" textLength="113.4" lengthAdjust="spacing">KVILLEBÄCKEN</text>
<text x="863.6" y="3.5" font-size="9" fill="#a9a9a9" stroke="#a9a9a9" stroke-width="0.35" textLength="70.6" lengthAdjust="spacing">ST. JÖRGEN</text>
<text x="940.6" y="63.7" font-size="9" fill="#a9a9a9" stroke="#a9a9a9" stroke-width="0.35" textLength="112.3" lengthAdjust="spacing">LILLHAGEN BRUNNSBO</text>
<text x="1012.4" y="177.8" font-size="13.5" fill="#d2d2d2" stroke="#d2d2d2" stroke-width="0.45" textLength="53.2" lengthAdjust="spacingAndGlyphs">Tingstad</text>
<text x="1139.7" y="157.0" font-size="13.5" fill="#d2d2d2" stroke="#d2d2d2" stroke-width="0.45" textLength="82.9" lengthAdjust="spacingAndGlyphs">Gamlestaden</text>
<text x="1183.7" y="195.6" font-size="9" fill="#a9a9a9" stroke="#a9a9a9" stroke-width="0.35" textLength="76" lengthAdjust="spacing">GAMLESTADEN</text>
<text x="115.3" y="312.8" font-size="13.5" fill="#d2d2d2" stroke="#d2d2d2" stroke-width="0.45" textLength="45.6" lengthAdjust="spacingAndGlyphs">Syrhåla</text>
<text x="91.4" y="337.8" font-size="13.5" fill="#d2d2d2" stroke="#d2d2d2" stroke-width="0.45" textLength="42.4" lengthAdjust="spacingAndGlyphs">Härröd</text>
<text x="273.1" y="297.8" font-size="13.5" fill="#d2d2d2" stroke="#d2d2d2" stroke-width="0.45" textLength="41.7" lengthAdjust="spacingAndGlyphs">Sörred</text>
<text x="270.4" y="267.7" font-size="9" fill="#a9a9a9" stroke="#a9a9a9" stroke-width="0.35" textLength="45.6" lengthAdjust="spacing">HISINGEN</text>
<text x="163.2" y="496.8" font-size="13.5" fill="#d2d2d2" stroke="#d2d2d2" stroke-width="0.45" textLength="58.6" lengthAdjust="spacingAndGlyphs">Synneröd</text>
<text x="368.7" y="474.9" font-size="13.5" fill="#d2d2d2" stroke="#d2d2d2" stroke-width="0.45" textLength="70.1" lengthAdjust="spacingAndGlyphs">Halvorsäng</text>
<text x="368.7" y="496.8" font-size="13.5" fill="#d2d2d2" stroke="#d2d2d2" stroke-width="0.45" textLength="34.7" lengthAdjust="spacingAndGlyphs">Viken</text>
<text x="584.0" y="359.1" font-size="9" fill="#a9a9a9" stroke="#a9a9a9" stroke-width="0.35" textLength="56" lengthAdjust="spacing">KYRKBYN</text>
<text x="606.0" y="433.2" font-size="9" fill="#a9a9a9" stroke="#a9a9a9" stroke-width="0.35" textLength="40" lengthAdjust="spacing">BRÄCKE</text>
<text x="646.0" y="297.0" font-size="13.5" fill="#d2d2d2" stroke="#d2d2d2" stroke-width="0.45" textLength="44.7" lengthAdjust="spacingAndGlyphs">Lundby</text>
<text x="729.3" y="330.6" font-size="9" fill="#a9a9a9" stroke="#a9a9a9" stroke-width="0.35" textLength="87.3" lengthAdjust="spacing">BRÄMAREGÅRDEN</text>
<text x="789.5" y="433.6" font-size="9" fill="#a9a9a9" stroke="#a9a9a9" stroke-width="0.35" textLength="64.4" lengthAdjust="spacing">LINDHOLMEN</text>
<text x="664.5" y="442.4" font-size="9" fill="#a9a9a9" stroke="#a9a9a9" stroke-width="0.35" textLength="74.5" lengthAdjust="spacing">SANNEGÅRDEN</text>
<text x="654.1" y="481.8" font-size="13.5" fill="#d2d2d2" stroke="#d2d2d2" stroke-width="0.45" textLength="59" lengthAdjust="spacingAndGlyphs">Eriksberg</text>
<text x="1009.6" y="271.6" font-size="13.5" fill="#d2d2d2" stroke="#d2d2d2" stroke-width="0.45" textLength="42.8" lengthAdjust="spacingAndGlyphs">Ringön</text>
<text x="1013.5" y="338.3" font-size="12" fill="#bdbdbd" stroke="#bdbdbd" stroke-width="0.5" textLength="128.5" lengthAdjust="spacing">GULLBERGSVASS</text>
<text x="1174.4" y="349.9" font-size="13.5" fill="#d2d2d2" stroke="#d2d2d2" stroke-width="0.45" textLength="62.5" lengthAdjust="spacingAndGlyphs">Olskroken</text>
<text x="1198.7" y="296.6" font-size="9" fill="#a9a9a9" stroke="#a9a9a9" stroke-width="0.35" textLength="70" lengthAdjust="spacing">STRÖMMEN</text>
<text x="1193.0" y="430.9" font-size="12" fill="#bdbdbd" stroke="#bdbdbd" stroke-width="0.5" textLength="62" lengthAdjust="spacing">LUNDEN</text>
<text x="1196.4" y="486.4" font-size="9" fill="#a9a9a9" stroke="#a9a9a9" stroke-width="0.35" textLength="12.7" lengthAdjust="spacing">BÖ</text>
<text x="1069.1" y="471.4" font-size="12" fill="#bdbdbd" stroke="#bdbdbd" stroke-width="0.5" textLength="50.9" lengthAdjust="spacing">HEDEN</text>
<text x="158.6" y="538.8" font-size="9" fill="#a9a9a9" stroke="#a9a9a9" stroke-width="0.35" textLength="44.7" lengthAdjust="spacing">ARENDAL</text>
<text x="467.1" y="540.4" font-size="13.5" fill="#d2d2d2" stroke="#d2d2d2" stroke-width="0.45" textLength="43.3" lengthAdjust="spacingAndGlyphs">Rödjan</text>
<text x="410.4" y="565.4" font-size="13.5" fill="#d2d2d2" stroke="#d2d2d2" stroke-width="0.45" textLength="45.1" lengthAdjust="spacingAndGlyphs">Skarvik</text>
<text x="602.5" y="519.1" font-size="13.5" fill="#d2d2d2" stroke="#d2d2d2" stroke-width="0.45" textLength="54" lengthAdjust="spacingAndGlyphs">Färjenäs</text>
<text x="542.3" y="739.0" font-size="12" fill="#bdbdbd" stroke="#bdbdbd" stroke-width="0.5" textLength="72.5" lengthAdjust="spacing">KUNGSSTEN</text>
<text x="737.4" y="571.2" font-size="9" fill="#a9a9a9" stroke="#a9a9a9" stroke-width="0.35" textLength="47.5" lengthAdjust="spacing">MAJORNA</text>
<text x="679.6" y="662.7" font-size="9" fill="#a9a9a9" stroke="#a9a9a9" stroke-width="0.35" textLength="86.8" lengthAdjust="spacing">KUNGSLADUGÅRD</text>
<text x="815.0" y="692.8" font-size="9" fill="#a9a9a9" stroke="#a9a9a9" stroke-width="0.35" textLength="78.2" lengthAdjust="spacing">SLOTTSSKOGEN</text>
<text x="864.4" y="560.0" font-size="9" fill="#a9a9a9" stroke="#a9a9a9" stroke-width="0.35" textLength="68.9" lengthAdjust="spacing">LINNÉSTADEN</text>
<text x="1158.2" y="519.1" font-size="13.5" fill="#d2d2d2" stroke="#d2d2d2" stroke-width="0.45" textLength="46.3" lengthAdjust="spacingAndGlyphs">Örgryte</text>
<text x="1002.0" y="641.4" font-size="12" fill="#bdbdbd" stroke="#bdbdbd" stroke-width="0.5" textLength="113.4" lengthAdjust="spacing">JOHANNEBERG</text>
<text x="999.0" y="725.2" font-size="9" fill="#a9a9a9" stroke="#a9a9a9" stroke-width="0.35" textLength="59" lengthAdjust="spacing">GULDHEDEN</text>
<text x="1191.8" y="698.5" font-size="9" fill="#a9a9a9" stroke="#a9a9a9" stroke-width="0.35" textLength="62" lengthAdjust="spacing">KALLEBÄCK</text>
<text x="1167.5" y="735.6" font-size="9" fill="#a9a9a9" stroke="#a9a9a9" stroke-width="0.35" textLength="57.9" lengthAdjust="spacing">KROKSLÄTT</text>
<text x="451.9" y="803.3" font-size="12" fill="#bdbdbd" stroke="#bdbdbd" stroke-width="0.5" textLength="81.1" lengthAdjust="spacing">ÄLVSBORG</text>
<text x="376.0" y="813.5" font-size="13.5" fill="#d2d2d2" stroke="#d2d2d2" stroke-width="0.45" textLength="55.7" lengthAdjust="spacingAndGlyphs">Älvsborg</text>
<text x="305.8" y="852.6" font-size="13.5" fill="#d2d2d2" stroke="#d2d2d2" stroke-width="0.45" textLength="66.6" lengthAdjust="spacingAndGlyphs">Långedrag</text>
<text x="377.2" y="882.7" font-size="13.5" fill="#d2d2d2" stroke="#d2d2d2" stroke-width="0.45" textLength="55" lengthAdjust="spacingAndGlyphs">Tranered</text>
<text x="275.0" y="882.7" font-size="13.5" fill="#d2d2d2" stroke="#d2d2d2" stroke-width="0.45" textLength="65.7" lengthAdjust="spacingAndGlyphs">Vässingsö</text>
<text x="540.8" y="935.6" font-size="13.5" fill="#d2d2d2" stroke="#d2d2d2" stroke-width="0.45" textLength="69.2" lengthAdjust="spacingAndGlyphs">Grimmered</text>
<text x="773.4" y="764.2" font-size="9" fill="#a9a9a9" stroke="#a9a9a9" stroke-width="0.35" textLength="96" lengthAdjust="spacing">FRÖLUNDABORG</text>
<text x="716.5" y="822.2" font-size="9" fill="#a9a9a9" stroke="#a9a9a9" stroke-width="0.35" textLength="81.8" lengthAdjust="spacing">HÖGSBOTORP</text>
<text x="771.0" y="866.1" font-size="12" fill="#bdbdbd" stroke="#bdbdbd" stroke-width="0.5" textLength="62.8" lengthAdjust="spacing">HÖGSBO</text>
<text x="758.0" y="913.5" font-size="9" fill="#a9a9a9" stroke="#a9a9a9" stroke-width="0.35" textLength="45.5" lengthAdjust="spacing">FLATÅS</text>
<text x="1007.1" y="796.2" font-size="13.5" fill="#d2d2d2" stroke="#d2d2d2" stroke-width="0.45" textLength="85.8" lengthAdjust="spacingAndGlyphs">Toltorpsdalen</text>
<text x="1111.4" y="927.7" font-size="9" fill="#a9a9a9" stroke="#a9a9a9" stroke-width="0.35" textLength="49.8" lengthAdjust="spacing">BIFROST</text>
<text x="1096.7" y="983.5" font-size="12" fill="#bdbdbd" stroke="#bdbdbd" stroke-width="0.5" textLength="81.6" lengthAdjust="spacing">SOLÄNGEN</text>
<text x="1186.1" y="962.1" font-size="9" fill="#a9a9a9" stroke="#a9a9a9" stroke-width="0.35" textLength="64" lengthAdjust="spacing">BOSGÅRDEN</text>
<text x="904.4" y="517.8" font-size="9" fill="#a9a9a9" stroke="#a9a9a9" stroke-width="0.35" textLength="54.4" lengthAdjust="spacing">PUSTERVIK</text>
<text x="913.3" y="533.8" font-size="9" fill="#a9a9a9" stroke="#a9a9a9" stroke-width="0.35" textLength="27" lengthAdjust="spacing">HAGA</text>
<text x="1239.0" y="873.0" font-size="13.5" fill="#d2d2d2" stroke="#d2d2d2" stroke-width="0.45" textLength="70" lengthAdjust="spacingAndGlyphs">Lackarebäck</text>
<text x="978.8" y="427.4" font-size="24" fill="#c6c6c6" stroke="#c6c6c6" stroke-width="0.6" textLength="107.6" lengthAdjust="spacingAndGlyphs">Göteborg</text></g>
<g font-family="Liberation Sans"><text transform="translate(295.0,221.1) rotate(80)" text-anchor="middle" font-size="10.5" fill="#8a8a8a" textLength="68" lengthAdjust="spacingAndGlyphs">Sörredsvägen</text>
<text transform="translate(410.4,19.5) rotate(-65)" text-anchor="middle" font-size="10.5" fill="#8a8a8a" textLength="68" lengthAdjust="spacingAndGlyphs">Sörredsvägen</text>
<text transform="translate(395.3,119.2) rotate(21)" text-anchor="middle" font-size="10.5" fill="#8a8a8a" textLength="77" lengthAdjust="spacingAndGlyphs">John Bunyans v</text>
<text transform="translate(440.5,179.5) rotate(-72)" text-anchor="middle" font-size="10.5" fill="#8a8a8a" textLength="64" lengthAdjust="spacingAndGlyphs">Hisingsleden</text>
<text transform="translate(534.2,25.5) rotate(30)" text-anchor="middle" font-size="10.5" fill="#8a8a8a" textLength="74" lengthAdjust="spacingAndGlyphs">Sjölandavägen</text>
<text transform="translate(756.0,203.7) rotate(18)" text-anchor="middle" font-size="10.5" fill="#8a8a8a" textLength="74" lengthAdjust="spacingAndGlyphs">Sjölandavägen</text>
<text transform="translate(1145.5,66.0) rotate(-80)" text-anchor="middle" font-size="10.5" fill="#8a8a8a" textLength="58" lengthAdjust="spacingAndGlyphs">Exportgatan</text>
<text transform="translate(1025.0,126.2) rotate(80)" text-anchor="middle" font-size="10.5" fill="#8a8a8a" textLength="74" lengthAdjust="spacingAndGlyphs">Litteraturgatan</text>
<text transform="translate(106.5,390.4) rotate(-75)" text-anchor="middle" font-size="10.5" fill="#8a8a8a" textLength="80" lengthAdjust="spacingAndGlyphs">Hamneviksvägen</text>
<text transform="translate(257.0,472.5) rotate(-20)" text-anchor="middle" font-size="10.5" fill="#8a8a8a" textLength="70" lengthAdjust="spacingAndGlyphs">Arendalsvägen</text>
<text transform="translate(72.0,478.5) rotate(-75)" text-anchor="middle" font-size="10.5" fill="#8a8a8a" textLength="66" lengthAdjust="spacingAndGlyphs">Terminalvägen</text>
<text transform="translate(130.0,483.5) rotate(82)" text-anchor="middle" font-size="10.5" fill="#8a8a8a" textLength="48" lengthAdjust="spacingAndGlyphs">Godsgatan</text>
<text transform="translate(357.1,406.5) rotate(-75)" text-anchor="middle" font-size="10.5" fill="#8a8a8a" textLength="58" lengthAdjust="spacingAndGlyphs">Halvors länk</text>
<text transform="translate(603.7,390.4) rotate(-20)" text-anchor="middle" font-size="10.5" fill="#8a8a8a" textLength="70" lengthAdjust="spacingAndGlyphs">Lundbytunneln</text>
<text transform="translate(728.2,312.8) rotate(-17)" text-anchor="middle" font-size="10.5" fill="#8a8a8a" textLength="112" lengthAdjust="spacingAndGlyphs">Hjalmar Brantingsgatan</text>
<text transform="translate(894.8,344.1) rotate(-55)" text-anchor="middle" font-size="10.5" fill="#8a8a8a" textLength="58" lengthAdjust="spacingAndGlyphs">Lundbyleden</text>
<text transform="translate(980.0,334.8) rotate(65)" text-anchor="middle" font-size="10.5" fill="#8a8a8a" textLength="58" lengthAdjust="spacingAndGlyphs">Hisingsbron</text>
<text transform="translate(143.5,661.5) rotate(-75)" text-anchor="middle" font-size="10.5" fill="#8a8a8a" textLength="92" lengthAdjust="spacingAndGlyphs">Tilbury - Göteborg</text>
<text transform="translate(95.0,723.5) rotate(-17)" text-anchor="middle" font-size="10.5" fill="#8a8a8a" textLength="160" lengthAdjust="spacingAndGlyphs">Göteborg, SE - Fredrikshamn, DK</text>
<text transform="translate(330.5,529.5) rotate(-15)" text-anchor="middle" font-size="10.5" fill="#8a8a8a" textLength="48" lengthAdjust="spacingAndGlyphs">Oljevägen</text>
<text transform="translate(537.7,535.4) rotate(-12)" text-anchor="middle" font-size="10.5" fill="#8a8a8a" textLength="48" lengthAdjust="spacingAndGlyphs">Oljevägen</text>
<text transform="translate(594.4,587.5) rotate(70)" text-anchor="middle" font-size="10.5" fill="#8a8a8a" textLength="70" lengthAdjust="spacingAndGlyphs">Älvsborgsbron</text>
<text transform="translate(409.2,667.3) rotate(-15)" text-anchor="middle" font-size="10.5" fill="#8a8a8a" textLength="170" lengthAdjust="spacingAndGlyphs">Fredrikshamn, DK  Göteborg, SE</text>
<text transform="translate(486.8,732.1) rotate(-5)" text-anchor="middle" font-size="10.5" fill="#8a8a8a" textLength="72" lengthAdjust="spacingAndGlyphs">Hästeviksgatan</text>
<text transform="translate(714.3,571.3) rotate(-40)" text-anchor="middle" font-size="10.5" fill="#8a8a8a" textLength="58" lengthAdjust="spacingAndGlyphs">Oscarsleden</text>
<text transform="translate(795.3,631.5) rotate(-65)" text-anchor="middle" font-size="10.5" fill="#8a8a8a" textLength="60" lengthAdjust="spacingAndGlyphs">Dag Hammarskjöldsleden</text>
<text transform="translate(1164.0,666.2) rotate(70)" text-anchor="middle" font-size="10.5" fill="#8a8a8a" textLength="68" lengthAdjust="spacingAndGlyphs">Mölndalsvägen</text>
<text transform="translate(1190.6,580.5) rotate(72)" text-anchor="middle" font-size="10.5" fill="#8a8a8a" textLength="80" lengthAdjust="spacingAndGlyphs">St Sigfridsgatan</text>
<text transform="translate(1114.0,717.1) rotate(62)" text-anchor="middle" font-size="10.5" fill="#8a8a8a" textLength="70" lengthAdjust="spacingAndGlyphs">Fridkullagatan</text>
<text transform="translate(1019.3,592.1) rotate(80)" text-anchor="middle" font-size="10.5" fill="#8a8a8a" textLength="62" lengthAdjust="spacingAndGlyphs">Eklandagatan</text>
<text transform="translate(998.9,502.4) rotate(-30)" text-anchor="middle" font-size="10.5" fill="#8a8a8a" textLength="46" lengthAdjust="spacingAndGlyphs">Nya Allén</text>
<text transform="translate(1045.6,470.2) rotate(-65)" text-anchor="middle" font-size="10.5" fill="#8a8a8a" textLength="46" lengthAdjust="spacingAndGlyphs">Parkgatan</text>
<text transform="translate(1055.6,519.1) rotate(60)" text-anchor="middle" font-size="10.5" fill="#8a8a8a" textLength="56" lengthAdjust="spacingAndGlyphs">Södra vägen</text>
<text transform="translate(561.0,816.3) rotate(-70)" text-anchor="middle" font-size="10.5" fill="#8a8a8a" textLength="56" lengthAdjust="spacingAndGlyphs">Västerleden</text>
<text transform="translate(580.0,854.2) rotate(88)" text-anchor="middle" font-size="10.5" fill="#8a8a8a" textLength="80" lengthAdjust="spacingAndGlyphs">Grimmeredsvägen</text>
<text transform="translate(489.8,927.5) rotate(20)" text-anchor="middle" font-size="10.5" fill="#8a8a8a" textLength="72" lengthAdjust="spacingAndGlyphs">Tranerdsvägen</text>
<text transform="translate(434.0,968.0) rotate(-78)" text-anchor="middle" font-size="10.5" fill="#8a8a8a" textLength="70" lengthAdjust="spacingAndGlyphs">Långkärrsvägen</text>
<text transform="translate(685.6,768.8) rotate(55)" text-anchor="middle" font-size="10.5" fill="#8a8a8a" textLength="58" lengthAdjust="spacingAndGlyphs">Högsboleden</text>
<text transform="translate(801.8,977.5) rotate(-85)" text-anchor="middle" font-size="10.5" fill="#8a8a8a" textLength="50" lengthAdjust="spacingAndGlyphs">Dag Hammarskjöldsleden</text>
<text transform="translate(716.5,977.5) rotate(-62)" text-anchor="middle" font-size="10.5" fill="#8a8a8a" textLength="50" lengthAdjust="spacingAndGlyphs">Axel Dahlströms torg</text>
<text transform="translate(1213.4,913.5) rotate(-30)" text-anchor="middle" font-size="10.5" fill="#8a8a8a" textLength="62" lengthAdjust="spacingAndGlyphs">Bifrostgatan</text>
<text transform="translate(1230.0,523.5) rotate(8)" text-anchor="middle" font-size="10.5" fill="#8a8a8a" textLength="40" lengthAdjust="spacingAndGlyphs">Bergsjövägen</text></g>

<polyline points="0.0,150.0 18.1,148.8 11.6,159.7 15.0,164.4 14.4,172.5 23.1,184.0 47.5,177.8 62.0,241.4 76.4,238.0 82.2,229.9 91.4,229.9 93.8,226.9 98.4,228.0 99.5,208.3 96.8,187.5 130.8,188.0 130.8,231.5 134.3,231.5 134.3,118.1 138.9,118.5 137.7,92.6 135.4,75.2 138.9,63.7 153.9,55.1 164.4,59.0 174.8,68.3 171.3,75.2 178.2,79.9 187.0,85.6 184.0,88.4 177.1,87.5 169.0,86.1 171.3,94.9 180.6,144.7 184.0,146.3 188.7,141.7 203.7,140.0 208.3,136.6 204.9,131.9 203.7,126.2 199.5,119.2 203.7,112.3 218.7,106.0 238.4,120.4 243.1,111.1 247.7,103.0 254.6,97.2 260.4,92.1 265.0,99.5 262.7,111.1 258.1,122.7 269.7,127.3 314.0,116.9" fill="none" stroke="#1cc8b6" stroke-width="1.9" stroke-linejoin="round"/>
<polyline points="357.1,1.2 367.6,25.5 368.0,45.1 388.4,55.6 432.4,91.4 445.1,122.7 454.4,105.3" fill="none" stroke="#1cc8b6" stroke-width="1.9" stroke-linejoin="round"/>
<polyline points="388.4,55.6 373.3,76.4 346.7,91.4 336.3,99.5 332.8,111.1 314.0,116.9" fill="none" stroke="#1cc8b6" stroke-width="1.9" stroke-linejoin="round"/>
<polyline points="438.9,1.2 439.3,18.5 443.9,46.3 450.9,76.4 454.4,105.3 450.9,145.8 441.6,175.9 434.7,192.1 420.8,222.2 410.4,249.0" fill="none" stroke="#1cc8b6" stroke-width="1.9" stroke-linejoin="round"/>
<polyline points="434.7,188.7 485.6,194.4 526.1,199.1 527.3,203.7 535.4,204.9 536.5,191.7 543.0,192.1 542.3,201.4 562.0,204.9" fill="none" stroke="#1cc8b6" stroke-width="1.9" stroke-linejoin="round"/>
<polyline points="485.6,194.4 496.0,145.4 511.1,149.3 528.4,152.8 530.8,157.4 564.3,159.3 568.9,162.0 568.9,170.1" fill="none" stroke="#1cc8b6" stroke-width="1.9" stroke-linejoin="round"/>
<polyline points="557.4,249.0 559.7,222.2 563.2,203.7 568.9,162.0 575.9,143.5 586.3,120.4 596.7,99.5 607.1,88.0" fill="none" stroke="#1cc8b6" stroke-width="1.9" stroke-linejoin="round"/>
<polyline points="607.1,88.0 594.4,78.7 593.2,69.4 579.4,53.2 553.9,76.4 551.6,68.3 557.4,63.7 527.3,64.8 521.5,55.6 520.3,42.8 525.0,41.7 540.0,37.0 541.2,32.4 522.6,26.6 515.7,33.6 513.4,42.8 499.5,42.8 491.4,27.8 491.4,15.0 500.7,6.9 490.2,1.9 484.5,3.5 462.5,2.3" fill="none" stroke="#1cc8b6" stroke-width="1.9" stroke-linejoin="round"/>
<polyline points="607.1,88.0 609.5,92.6 602.5,104.2 612.9,118.1 621.0,127.3 618.7,137.7 626.0,139.5" fill="none" stroke="#1cc8b6" stroke-width="1.9" stroke-linejoin="round"/>
<polyline points="626.0,193.3 618.7,200.2 611.8,213.0 600.2,206.0 589.8,216.4 577.0,240.7 574.7,249.0" fill="none" stroke="#1cc8b6" stroke-width="1.9" stroke-linejoin="round"/>
<polyline points="611.8,213.0 610.0,249.0" fill="none" stroke="#1cc8b6" stroke-width="1.9" stroke-linejoin="round"/>
<polyline points="677.2,1.2 693.4,8.1 738.6,17.4 745.5,11.6 753.6,1.2" fill="none" stroke="#1cc8b6" stroke-width="1.9" stroke-linejoin="round"/>
<polyline points="738.6,17.4 746.7,28.9 744.4,37.0 776.8,45.1 771.0,54.4 761.7,53.2 775.6,59.0 759.4,100.7 766.4,127.3" fill="none" stroke="#1cc8b6" stroke-width="1.9" stroke-linejoin="round"/>
<polyline points="626.0,139.5 637.9,148.1 640.2,163.2 651.8,164.4 654.1,175.9 630.9,192.1 624.0,196.8" fill="none" stroke="#1cc8b6" stroke-width="1.9" stroke-linejoin="round"/>
<polyline points="626.0,193.3 642.5,196.8 644.8,235.0 654.1,235.0 656.4,245.4 659.9,249.0" fill="none" stroke="#1cc8b6" stroke-width="1.9" stroke-linejoin="round"/>
<polyline points="702.7,114.6 698.1,125.0 699.2,142.4 729.3,150.5 724.7,155.1 727.0,165.5 706.2,182.9 730.5,204.9 713.1,204.9 701.0,251.3" fill="none" stroke="#1cc8b6" stroke-width="1.9" stroke-linejoin="round"/>
<polyline points="702.7,114.6 766.4,127.3 832.3,144.7 841.6,140.0 842.8,152.8 859.0,193.3 868.2,194.4 868.2,191.0 884.4,193.3 884.4,201.4 864.7,216.4 862.4,249.0" fill="none" stroke="#1cc8b6" stroke-width="1.9" stroke-linejoin="round"/>
<polyline points="707.3,180.6 728.2,196.8 744.4,203.7 786.0,210.6 864.7,216.4" fill="none" stroke="#1cc8b6" stroke-width="1.9" stroke-linejoin="round"/>
<polyline points="884.4,193.3 901.8,191.0 940.3,185.8" fill="none" stroke="#1cc8b6" stroke-width="1.9" stroke-linejoin="round"/>
<polyline points="883.3,0.0 884.4,10.4 893.7,42.8 896.0,69.4 897.1,111.1 907.6,162.0 901.8,192.1" fill="none" stroke="#1cc8b6" stroke-width="1.9" stroke-linejoin="round"/>
<polyline points="883.3,10.4 897.1,11.6 922.6,6.9 938.0,16.2" fill="none" stroke="#1cc8b6" stroke-width="1.9" stroke-linejoin="round"/>
<polyline points="897.1,11.6 908.7,64.8 914.5,69.4 927.2,82.2 934.2,85.6 938.0,84.5" fill="none" stroke="#1cc8b6" stroke-width="1.9" stroke-linejoin="round"/>
<polyline points="938.0,16.2 949.9,23.1 959.1,18.5 969.6,1.2" fill="none" stroke="#1cc8b6" stroke-width="1.9" stroke-linejoin="round"/>
<polyline points="936.0,15.0 973.0,45.1 973.0,72.9 991.6,62.5 1003.1,70.6 1026.3,74.1" fill="none" stroke="#1cc8b6" stroke-width="1.9" stroke-linejoin="round"/>
<polyline points="977.7,40.5 990.4,23.1 1008.9,31.2 1011.2,26.6 1024.0,32.4 1036.7,38.2 1028.6,62.5 1027.4,89.1 1030.9,99.5 1042.5,99.5 1047.1,86.8 1064.5,108.8" fill="none" stroke="#1cc8b6" stroke-width="1.9" stroke-linejoin="round"/>
<polyline points="977.7,40.5 991.6,62.5" fill="none" stroke="#1cc8b6" stroke-width="1.9" stroke-linejoin="round"/>
<polyline points="938.0,84.5 945.3,76.4 949.9,68.3 959.1,74.1 966.1,76.4 961.5,81.0 961.5,92.6 966.1,97.2 973.0,103.0 975.4,111.1 963.8,113.4 952.2,118.1 960.3,122.7 959.1,129.6 961.5,145.8 964.9,148.1 964.9,162.0 967.2,189.8 962.6,189.8 966.1,206.0 973.0,195.6 988.1,197.9 989.2,200.2 1005.4,192.1 1014.7,178.2 1020.5,171.3 1003.1,162.0 1013.5,148.1 1022.8,151.6 1025.1,150.5 1030.9,158.6 1037.9,166.7 1035.5,182.9 1028.6,201.4 1019.3,210.6 1005.4,218.8 985.8,222.2 963.8,216.4 949.9,203.7 940.6,185.2 936.0,186.3" fill="none" stroke="#1cc8b6" stroke-width="1.9" stroke-linejoin="round"/>
<polyline points="940.3,185.8 945.3,196.8 966.1,215.3 993.9,225.7 1028.6,233.8 1058.7,230.3 1072.6,245.4 1076.0,249.0" fill="none" stroke="#1cc8b6" stroke-width="1.9" stroke-linejoin="round"/>
<polyline points="1089.9,1.2 1087.6,23.1 1084.1,46.3 1077.2,60.2 1070.3,85.6 1065.6,90.3 1064.5,101.9 1066.8,108.8 1058.7,110.0 1061.0,118.1 1054.1,126.2 1063.3,131.9 1065.6,136.6 1061.0,145.8 1065.6,152.8 1067.9,162.0 1062.2,159.7 1064.5,171.3 1072.6,174.8 1083.0,152.8 1093.4,153.9 1105.0,94.9 1169.8,108.8" fill="none" stroke="#1cc8b6" stroke-width="1.9" stroke-linejoin="round"/>
<polyline points="1202.2,1.2 1204.5,9.3 1202.2,27.8 1186.0,69.4 1167.5,111.1 1158.2,138.9 1144.3,185.2 1135.1,213.0 1123.5,249.0" fill="none" stroke="#1cc8b6" stroke-width="1.9" stroke-linejoin="round"/>
<polyline points="1183.7,249.0 1192.9,229.2 1202.2,222.2 1223.0,217.6 1249.7,216.4" fill="none" stroke="#1cc8b6" stroke-width="1.9" stroke-linejoin="round"/>
<polyline points="1223.0,217.6 1230.6,249.0" fill="none" stroke="#1cc8b6" stroke-width="1.9" stroke-linejoin="round"/>
<polyline points="1249.7,50.9 1246.2,55.6 1249.7,61.3" fill="none" stroke="#1cc8b6" stroke-width="1.9" stroke-linejoin="round"/>
<polyline points="410.4,249.0 397.6,273.5 381.4,305.9 372.2,331.3 371.0,349.9 379.1,368.4 397.6,389.2 427.7,417.0 455.5,444.8 474.0,458.6 487.9,464.4 489.1,473.7 548.1,471.4 549.3,474.9 557.4,486.4 562.6,497.0" fill="none" stroke="#1cc8b6" stroke-width="1.9" stroke-linejoin="round"/>
<polyline points="381.4,307.0 467.1,289.2 457.8,341.8 523.8,356.3 523.8,340.6 527.3,342.9 538.9,341.8 544.6,349.9 545.8,361.4 552.7,368.4 564.3,374.2 577.0,374.2 626.0,360.3" fill="none" stroke="#1cc8b6" stroke-width="1.9" stroke-linejoin="round"/>
<polyline points="467.1,289.2 470.6,273.5 521.5,302.4 534.2,300.1 543.5,307.0 544.6,315.1 549.3,317.4 559.7,290.8 559.7,261.9 557.4,249.0" fill="none" stroke="#1cc8b6" stroke-width="1.9" stroke-linejoin="round"/>
<polyline points="559.7,261.9 572.4,261.9 574.7,249.0" fill="none" stroke="#1cc8b6" stroke-width="1.9" stroke-linejoin="round"/>
<polyline points="559.7,278.1 568.9,301.2 579.4,336.0 578.2,356.8 577.0,374.2 578.2,378.8 566.6,400.8 556.2,407.7 545.8,419.3 547.0,444.8 548.1,471.4" fill="none" stroke="#1cc8b6" stroke-width="1.9" stroke-linejoin="round"/>
<polyline points="610.0,249.0 612.9,258.4 611.8,265.4 619.9,286.2 626.0,289.1" fill="none" stroke="#1cc8b6" stroke-width="1.9" stroke-linejoin="round"/>
<polyline points="611.8,363.7 612.9,373.0 621.0,374.2 622.2,381.1 626.0,381.1" fill="none" stroke="#1cc8b6" stroke-width="1.9" stroke-linejoin="round"/>
<polyline points="659.9,249.0 659.9,256.1 670.3,257.3 673.8,261.9 679.6,257.3 685.3,258.4 691.1,253.8 692.9,248.0" fill="none" stroke="#1cc8b6" stroke-width="1.9" stroke-linejoin="round"/>
<polyline points="692.9,248.0 694.6,271.1 700.4,289.7 709.6,305.9 713.1,322.1 700.4,327.9 698.1,340.6 690.0,367.2 717.8,367.2 723.5,379.9 725.9,399.6 721.2,400.8 721.2,406.6" fill="none" stroke="#1cc8b6" stroke-width="1.9" stroke-linejoin="round"/>
<polyline points="701.0,251.3 721.2,252.6 720.1,248.6" fill="none" stroke="#1cc8b6" stroke-width="1.9" stroke-linejoin="round"/>
<polyline points="705.0,248.0 706.2,271.1 703.9,273.5 708.5,275.8 712.0,290.8 709.6,303.6 716.6,308.2" fill="none" stroke="#1cc8b6" stroke-width="1.9" stroke-linejoin="round"/>
<polyline points="720.1,248.6 735.1,254.9 843.9,259.6 843.9,275.8 855.5,276.9 856.6,254.9 862.4,254.9 862.4,249.0" fill="none" stroke="#1cc8b6" stroke-width="1.9" stroke-linejoin="round"/>
<polyline points="856.6,276.9 855.5,296.6 885.6,303.6 892.5,307.0 905.2,297.8 914.5,302.4 922.6,290.8 938.0,290.8" fill="none" stroke="#1cc8b6" stroke-width="1.9" stroke-linejoin="round"/>
<polyline points="626.0,289.1 636.7,301.2 647.1,317.4 669.1,326.7 710.8,311.7 750.2,304.7 797.6,288.5 795.3,303.6 802.2,295.5 820.8,290.8 855.5,293.1" fill="none" stroke="#1cc8b6" stroke-width="1.9" stroke-linejoin="round"/>
<polyline points="827.7,292.0 846.2,297.8 852.0,309.3 860.1,310.5 864.7,322.1 872.8,310.5 891.4,310.5 878.6,331.3 885.6,337.1" fill="none" stroke="#1cc8b6" stroke-width="1.9" stroke-linejoin="round"/>
<polyline points="750.2,304.7 755.9,326.7 774.5,327.9 795.3,333.6 820.8,333.6 830.0,340.6 846.2,345.2 853.2,359.1 862.4,361.4" fill="none" stroke="#1cc8b6" stroke-width="1.9" stroke-linejoin="round"/>
<polyline points="647.1,317.4 650.6,333.6 637.9,349.9 626.0,360.3" fill="none" stroke="#1cc8b6" stroke-width="1.9" stroke-linejoin="round"/>
<polyline points="922.6,290.8 913.4,308.2 901.8,322.1 885.6,340.6 862.4,361.4 843.9,377.6 809.2,384.6 762.9,389.2 739.7,403.1 721.2,406.6 665.7,408.9 656.4,414.7 640.2,410.0 641.4,392.7 633.3,386.9 636.7,376.5 626.0,381.1" fill="none" stroke="#1cc8b6" stroke-width="1.9" stroke-linejoin="round"/>
<polyline points="739.7,403.1 744.4,410.0 758.3,419.3 750.2,447.1 751.3,479.5 758.3,497.0" fill="none" stroke="#1cc8b6" stroke-width="1.9" stroke-linejoin="round"/>
<polyline points="706.2,408.9 705.0,430.9 695.8,447.1 670.3,463.3 662.2,479.5 661.0,488.7 646.0,496.4" fill="none" stroke="#1cc8b6" stroke-width="1.9" stroke-linejoin="round"/>
<polyline points="818.4,497.0 869.4,481.8 894.8,470.2 916.8,451.7 940.0,410.0" fill="none" stroke="#1cc8b6" stroke-width="1.9" stroke-linejoin="round"/>
<polyline points="938.0,290.8 949.9,292.0 961.5,297.8 968.4,310.5 970.7,324.4 976.5,340.6 989.2,354.5" fill="none" stroke="#1cc8b6" stroke-width="1.9" stroke-linejoin="round"/>
<polyline points="973.0,373.0 1005.4,347.5 1033.2,322.1 1065.6,301.2 1102.7,275.8 1116.6,261.9 1123.5,249.0" fill="none" stroke="#1cc8b6" stroke-width="1.9" stroke-linejoin="round"/>
<polyline points="1076.0,249.0 1102.7,274.6 1118.9,301.2 1135.1,322.1 1144.3,338.3 1149.0,352.2 1147.8,366.1 1158.2,379.9 1165.2,396.1 1161.7,421.6 1157.1,447.1 1153.6,470.2 1153.6,497.0" fill="none" stroke="#1cc8b6" stroke-width="1.9" stroke-linejoin="round"/>
<polyline points="1102.7,274.6 1109.6,285.0 1153.6,287.4 1162.9,280.4 1183.7,249.0" fill="none" stroke="#1cc8b6" stroke-width="1.9" stroke-linejoin="round"/>
<polyline points="1014.7,423.9 1040.2,419.3 1074.9,405.4 1088.8,404.2 1092.2,410.0 1109.6,393.8 1116.6,397.3 1095.7,433.2 1139.7,435.5 1152.4,443.6" fill="none" stroke="#1cc8b6" stroke-width="1.9" stroke-linejoin="round"/>
<polyline points="1230.6,249.0 1233.5,264.2 1219.6,270.0 1212.6,308.2 1205.7,340.6 1209.1,359.1 1216.1,358.0 1220.7,361.4 1252.0,368.4" fill="none" stroke="#1cc8b6" stroke-width="1.9" stroke-linejoin="round"/>
<polyline points="1233.5,264.2 1248.5,253.8 1239.2,268.8 1235.8,285.0 1225.4,296.6 1234.6,308.2 1246.2,297.8 1252.0,301.2" fill="none" stroke="#1cc8b6" stroke-width="1.9" stroke-linejoin="round"/>
<polyline points="1205.7,340.6 1218.4,331.3 1252.0,327.9" fill="none" stroke="#1cc8b6" stroke-width="1.9" stroke-linejoin="round"/>
<polyline points="1206.8,361.4 1190.6,382.3 1174.4,407.7 1167.5,442.4 1168.6,465.6 1171.0,472.0" fill="none" stroke="#1cc8b6" stroke-width="1.9" stroke-linejoin="round"/>
<polyline points="1160.5,463.3 1167.5,465.6 1171.0,472.0" fill="none" stroke="#1cc8b6" stroke-width="1.9" stroke-linejoin="round"/>
<polyline points="1206.8,361.4 1213.8,377.6 1211.5,405.4 1223.0,407.7 1223.0,410.0 1197.6,419.3 1198.7,440.1 1172.1,445.9" fill="none" stroke="#1cc8b6" stroke-width="1.9" stroke-linejoin="round"/>
<polyline points="1227.7,407.7 1232.3,407.7 1233.5,414.7 1223.0,428.6 1219.6,454.0 1216.1,465.6 1220.7,473.7 1252.0,467.9" fill="none" stroke="#1cc8b6" stroke-width="1.9" stroke-linejoin="round"/>
<polyline points="1252.0,368.4 1246.2,386.9 1247.3,398.5 1243.9,405.4 1227.7,407.7" fill="none" stroke="#1cc8b6" stroke-width="1.9" stroke-linejoin="round"/>
<polyline points="138.2,745.0 171.3,718.2 206.0,691.6 224.5,665.0 225.7,644.1 231.5,625.6 252.3,626.8 253.5,630.3 265.0,639.5 275.5,671.9 289.4,671.9 297.5,669.6 314.0,669.6" fill="none" stroke="#1cc8b6" stroke-width="1.9" stroke-linejoin="round"/>
<polyline points="314.0,669.6 402.3,670.8 416.2,665.0 425.4,655.7 433.5,632.6 465.9,643.0 493.7,637.2 538.9,653.4 555.1,639.5 585.1,631.4 612.9,616.4 626.0,607.1" fill="none" stroke="#1cc8b6" stroke-width="1.9" stroke-linejoin="round"/>
<polyline points="403.4,670.8 413.9,695.1 423.1,724.0 427.7,725.2 432.4,739.1 426.2,745.0" fill="none" stroke="#1cc8b6" stroke-width="1.9" stroke-linejoin="round"/>
<polyline points="562.6,497.0 566.6,505.3 578.2,535.4 596.7,577.0 608.3,616.4 623.3,658.0 628.0,676.6" fill="none" stroke="#1cc8b6" stroke-width="1.9" stroke-linejoin="round"/>
<polyline points="566.6,505.3 585.1,513.4 612.9,507.6 626.0,502.9" fill="none" stroke="#1cc8b6" stroke-width="1.9" stroke-linejoin="round"/>
<polyline points="626.0,710.1 619.9,709.0 596.7,727.5 601.4,734.4 585.1,741.4 573.6,746.0" fill="none" stroke="#1cc8b6" stroke-width="1.9" stroke-linejoin="round"/>
<polyline points="623.3,709.0 624.5,722.9 628.0,727.5" fill="none" stroke="#1cc8b6" stroke-width="1.9" stroke-linejoin="round"/>
<polyline points="626.0,607.1 656.4,585.1 669.1,570.1 668.0,566.6 680.7,549.2 698.1,534.2 723.5,522.6 762.9,506.4 809.2,498.3 832.3,496.0" fill="none" stroke="#1cc8b6" stroke-width="1.9" stroke-linejoin="round"/>
<polyline points="626.0,502.9 642.5,497.2 646.0,496.4" fill="none" stroke="#1cc8b6" stroke-width="1.9" stroke-linejoin="round"/>
<polyline points="758.3,497.0 764.0,506.4 765.2,513.4 783.7,542.3 762.9,553.9 740.9,562.0 731.6,570.1 730.5,588.6 732.8,601.3 744.4,599.0 755.9,609.4 759.4,630.3 764.0,640.7 758.3,643.0 762.9,655.7" fill="none" stroke="#1cc8b6" stroke-width="1.9" stroke-linejoin="round"/>
<polyline points="656.4,585.1 665.7,588.6 671.5,600.2 685.3,609.4 702.7,590.9 707.3,595.5 721.2,587.4 729.3,588.6" fill="none" stroke="#1cc8b6" stroke-width="1.9" stroke-linejoin="round"/>
<polyline points="685.3,609.4 700.4,627.9 723.5,653.4 765.2,655.7 786.0,649.9 799.9,627.9 827.7,621.0 813.8,600.2 841.6,593.2 842.8,585.1 862.4,582.8 856.6,571.2 868.2,568.9 868.2,541.1 871.7,542.3" fill="none" stroke="#1cc8b6" stroke-width="1.9" stroke-linejoin="round"/>
<polyline points="762.9,555.0 762.9,563.1 750.2,570.1 753.6,588.6 762.9,602.5 781.4,618.7 799.9,625.6" fill="none" stroke="#1cc8b6" stroke-width="1.9" stroke-linejoin="round"/>
<polyline points="764.0,506.4 811.5,498.3 818.4,497.0" fill="none" stroke="#1cc8b6" stroke-width="1.9" stroke-linejoin="round"/>
<polyline points="809.2,505.3 813.8,509.9 811.5,516.8 797.6,515.7 804.6,556.2 813.8,600.2" fill="none" stroke="#1cc8b6" stroke-width="1.9" stroke-linejoin="round"/>
<polyline points="811.5,516.8 820.8,521.5 821.9,533.0 827.7,542.3 821.9,570.1 834.6,563.1 848.5,560.8" fill="none" stroke="#1cc8b6" stroke-width="1.9" stroke-linejoin="round"/>
<polyline points="783.7,649.9 781.4,676.6 779.1,692.8 795.3,703.2 806.9,725.2 802.0,745.0" fill="none" stroke="#1cc8b6" stroke-width="1.9" stroke-linejoin="round"/>
<polyline points="624.0,655.7 642.5,667.3 651.8,655.7 666.8,668.5 674.9,662.7 692.3,678.9 681.9,692.8 725.9,688.1 730.5,736.7 742.1,739.1 742.9,745.0" fill="none" stroke="#1cc8b6" stroke-width="1.9" stroke-linejoin="round"/>
<polyline points="725.9,655.7 721.2,674.2 716.6,678.9 718.9,688.1" fill="none" stroke="#1cc8b6" stroke-width="1.9" stroke-linejoin="round"/>
<polyline points="624.0,655.7 626.3,681.2 626.0,710.1" fill="none" stroke="#1cc8b6" stroke-width="1.9" stroke-linejoin="round"/>
<polyline points="871.7,542.3 878.6,546.9 878.6,614.1 869.4,615.2 871.7,623.3 877.5,622.2 878.6,614.1 899.5,616.4 908.7,614.1 915.7,595.5 940.0,565.4" fill="none" stroke="#1cc8b6" stroke-width="1.9" stroke-linejoin="round"/>
<polyline points="862.4,584.0 865.9,593.2 864.7,609.4 869.4,622.2" fill="none" stroke="#1cc8b6" stroke-width="1.9" stroke-linejoin="round"/>
<polyline points="894.8,542.3 904.1,572.4 904.1,607.1 899.5,616.4" fill="none" stroke="#1cc8b6" stroke-width="1.9" stroke-linejoin="round"/>
<polyline points="980.0,536.5 983.5,551.6 1010.1,544.6 1017.0,563.1 1025.1,584.0 1027.4,604.8 1024.0,621.0 1012.4,630.3 1000.8,637.2 989.2,646.5 968.4,681.2 973.0,697.4 975.4,718.2 996.9,745.0" fill="none" stroke="#1cc8b6" stroke-width="1.9" stroke-linejoin="round"/>
<polyline points="961.5,580.5 955.7,594.4 947.6,614.1 946.4,625.6 953.4,637.2 959.1,646.5 954.5,648.8 961.5,665.0 968.4,683.5" fill="none" stroke="#1cc8b6" stroke-width="1.9" stroke-linejoin="round"/>
<polyline points="955.7,594.4 968.4,597.9 986.9,599.0 1007.8,616.4 1007.8,627.9" fill="none" stroke="#1cc8b6" stroke-width="1.9" stroke-linejoin="round"/>
<polyline points="997.3,609.4 1006.6,607.1 1012.4,609.4 1015.9,604.8 1008.9,595.5 1024.0,582.8 1058.7,565.4 1062.2,570.1 1061.0,585.1 1072.6,593.2 1074.9,602.5 1080.7,604.8" fill="none" stroke="#1cc8b6" stroke-width="1.9" stroke-linejoin="round"/>
<polyline points="1071.4,588.6 1077.2,590.9 1079.5,579.3 1089.9,579.3 1098.0,587.4 1098.0,570.1 1106.1,568.9 1103.8,557.3 1107.3,555.6" fill="none" stroke="#1cc8b6" stroke-width="1.9" stroke-linejoin="round"/>
<polyline points="1099.2,570.1 1105.0,593.2 1113.1,618.7 1109.6,644.1 1101.5,662.7 1086.5,668.5 1062.2,671.9 1059.8,660.4 1077.2,652.2 1073.7,644.1 1080.7,639.5 1076.0,623.3 1080.7,618.7 1086.5,629.1 1096.9,618.7 1093.4,607.1 1086.5,604.8 1080.7,604.8" fill="none" stroke="#1cc8b6" stroke-width="1.9" stroke-linejoin="round"/>
<polyline points="1024.0,639.5 1035.5,658.0 1047.1,674.2 1061.0,671.9" fill="none" stroke="#1cc8b6" stroke-width="1.9" stroke-linejoin="round"/>
<polyline points="1046.0,674.2 1057.5,704.3 1063.3,706.6 1070.3,722.9 1079.5,727.5 1088.8,741.5" fill="none" stroke="#1cc8b6" stroke-width="1.9" stroke-linejoin="round"/>
<polyline points="1086.5,668.5 1091.1,692.8 1091.1,709.0 1107.3,715.9 1108.5,725.2 1099.2,732.1 1088.8,739.1" fill="none" stroke="#1cc8b6" stroke-width="1.9" stroke-linejoin="round"/>
<polyline points="1100.4,662.7 1107.3,671.9 1121.2,666.1 1128.1,674.2 1133.9,671.9 1146.6,685.8 1151.3,658.0" fill="none" stroke="#1cc8b6" stroke-width="1.9" stroke-linejoin="round"/>
<polyline points="1132.8,671.9 1127.0,639.5 1137.4,637.2 1146.6,639.5 1151.3,658.0" fill="none" stroke="#1cc8b6" stroke-width="1.9" stroke-linejoin="round"/>
<polyline points="1151.3,658.0 1172.1,653.4 1183.7,690.4 1205.7,684.7" fill="none" stroke="#1cc8b6" stroke-width="1.9" stroke-linejoin="round"/>
<polyline points="1107.3,555.6 1111.9,572.4 1121.2,586.3 1135.1,607.1 1149.0,602.5 1150.1,595.5 1164.0,593.2" fill="none" stroke="#1cc8b6" stroke-width="1.9" stroke-linejoin="round"/>
<polyline points="1153.6,497.0 1154.8,519.1 1159.4,537.7 1165.2,593.2 1169.8,614.1 1181.4,644.1 1195.3,671.9 1206.8,697.4 1224.8,745.0" fill="none" stroke="#1cc8b6" stroke-width="1.9" stroke-linejoin="round"/>
<polyline points="1158.2,530.7 1172.1,526.1 1174.4,522.6 1179.1,533.0 1192.9,528.4 1199.9,521.5 1252.0,521.5" fill="none" stroke="#1cc8b6" stroke-width="1.9" stroke-linejoin="round"/>
<polyline points="1205.7,684.7 1223.0,639.5 1227.7,646.5 1252.0,669.6" fill="none" stroke="#1cc8b6" stroke-width="1.9" stroke-linejoin="round"/>
<polyline points="1206.8,681.2 1246.2,680.0 1247.3,690.4" fill="none" stroke="#1cc8b6" stroke-width="1.9" stroke-linejoin="round"/>
<polyline points="976.5,715.9 985.8,707.8 996.2,710.1 1003.1,707.8 997.3,713.6 1002.0,714.8 1022.8,684.7 1037.9,690.4 1050.6,711.3 1063.3,704.3" fill="none" stroke="#1cc8b6" stroke-width="1.9" stroke-linejoin="round"/>
<polyline points="138.2,745.0 129.2,752.3 143.4,774.8 133.9,787.9 0.0,792.6" fill="none" stroke="#1cc8b6" stroke-width="1.9" stroke-linejoin="round"/>
<polyline points="133.9,787.9 139.9,805.6 144.6,834.1 151.7,886.2 144.6,928.9 151.7,969.2 156.5,1000.0" fill="none" stroke="#1cc8b6" stroke-width="1.9" stroke-linejoin="round"/>
<polyline points="272.6,1000.0 305.8,957.4 314.0,950.3" fill="none" stroke="#1cc8b6" stroke-width="1.9" stroke-linejoin="round"/>
<polyline points="426.2,745.0 419.9,746.4 416.3,754.7 413.9,759.4 413.9,777.2 428.2,779.6 436.5,785.5 430.5,791.4 428.2,808.0 431.7,811.6 418.7,821.1 428.2,825.8 432.9,847.1" fill="none" stroke="#1cc8b6" stroke-width="1.9" stroke-linejoin="round"/>
<polyline points="314.0,950.3 347.6,902.8 342.8,882.7 341.6,848.3 354.7,850.7 366.5,860.2 380.8,872.0 392.6,869.7 466.1,831.7 489.8,797.3 492.8,799.7" fill="none" stroke="#1cc8b6" stroke-width="1.9" stroke-linejoin="round"/>
<polyline points="342.8,882.7 374.8,880.3 377.2,913.5 383.1,914.7 385.5,921.8 395.0,917.1 397.3,925.4 406.8,927.7 425.8,926.6 437.7,918.3 456.6,913.5 473.2,917.1 478.0,900.5 482.7,894.5 493.4,886.2 494.6,883.9 506.4,880.3 544.3,821.1 551.4,813.9 568.0,812.8 571.6,817.5 578.7,816.3" fill="none" stroke="#1cc8b6" stroke-width="1.9" stroke-linejoin="round"/>
<polyline points="492.8,799.7 511.1,822.2 530.1,857.8 544.3,898.1 556.2,938.4 572.8,969.2 591.8,1000.0" fill="none" stroke="#1cc8b6" stroke-width="1.9" stroke-linejoin="round"/>
<polyline points="558.6,748.8 558.6,753.5 568.0,777.2 577.5,781.9 579.9,791.4 578.7,816.3" fill="none" stroke="#1cc8b6" stroke-width="1.9" stroke-linejoin="round"/>
<polyline points="466.1,1000.0 492.2,981.1 511.1,966.9 551.4,940.8 563.3,938.4" fill="none" stroke="#1cc8b6" stroke-width="1.9" stroke-linejoin="round"/>
<polyline points="492.2,981.1 501.7,983.4 513.5,1000.0" fill="none" stroke="#1cc8b6" stroke-width="1.9" stroke-linejoin="round"/>
<polyline points="626.0,855.4 622.6,857.8 624.9,875.6 622.6,883.9 601.2,892.2 598.9,907.6 582.3,913.5 589.4,945.5 592.9,966.9 572.8,978.7 579.9,988.2 563.3,1000.0" fill="none" stroke="#1cc8b6" stroke-width="1.9" stroke-linejoin="round"/>
<polyline points="592.9,945.5 601.2,950.3 608.3,962.1 613.1,952.6 620.2,964.5 622.6,971.6 628.0,978.7" fill="none" stroke="#1cc8b6" stroke-width="1.9" stroke-linejoin="round"/>
<polyline points="670.2,744.0 676.2,758.2 695.1,777.2 714.1,786.7 725.9,789.0 741.4,787.9 768.6,777.2 775.7,773.6 781.7,773.6 782.8,777.2 787.6,773.6 790.0,778.4 798.3,777.2" fill="none" stroke="#1cc8b6" stroke-width="1.9" stroke-linejoin="round"/>
<polyline points="742.9,745.0 740.2,748.7 742.5,765.3 746.1,779.6 742.5,786.7" fill="none" stroke="#1cc8b6" stroke-width="1.9" stroke-linejoin="round"/>
<polyline points="802.0,745.0 801.8,751.1 794.7,765.3 798.3,772.4 823.1,784.3 831.4,780.7 819.6,867.3 813.7,899.3 782.8,895.7 781.7,900.5 775.7,952.6" fill="none" stroke="#1cc8b6" stroke-width="1.9" stroke-linejoin="round"/>
<polyline points="768.6,777.2 781.7,806.8 781.7,823.4 774.5,824.6 781.7,825.8 781.7,861.4" fill="none" stroke="#1cc8b6" stroke-width="1.9" stroke-linejoin="round"/>
<polyline points="654.2,779.0 685.6,773.6 714.1,786.7 711.7,803.3 709.3,806.8" fill="none" stroke="#1cc8b6" stroke-width="1.9" stroke-linejoin="round"/>
<polyline points="669.0,800.9 707.0,806.8 718.8,800.9 725.9,805.6 730.7,822.2 728.3,835.3 724.8,843.6 721.2,851.9 715.3,853.1 711.7,843.6 707.0,842.4 697.5,845.9 695.1,842.4 665.5,837.6 669.0,800.9" fill="none" stroke="#1cc8b6" stroke-width="1.9" stroke-linejoin="round"/>
<polyline points="656.0,776.0 652.4,781.9 647.7,798.5 657.2,815.1 665.5,819.9 665.5,836.5" fill="none" stroke="#1cc8b6" stroke-width="1.9" stroke-linejoin="round"/>
<polyline points="654.2,779.0 669.0,784.3 666.7,792.6 656.0,795.0 654.8,808.0 662.5,819.3" fill="none" stroke="#1cc8b6" stroke-width="1.9" stroke-linejoin="round"/>
<polyline points="626.0,855.4 645.3,855.4 635.9,838.8 646.5,828.2 662.5,819.3" fill="none" stroke="#1cc8b6" stroke-width="1.9" stroke-linejoin="round"/>
<polyline points="724.8,843.6 728.3,853.1 735.4,855.4 740.2,863.7 749.7,868.5 756.8,864.9 761.5,861.4 833.8,860.2 838.6,872.0 851.6,881.5 850.4,886.2 870.6,880.3 886.0,911.1 903.8,957.4 922.7,1000.0" fill="none" stroke="#1cc8b6" stroke-width="1.9" stroke-linejoin="round"/>
<polyline points="886.0,911.1 938.0,880.9" fill="none" stroke="#1cc8b6" stroke-width="1.9" stroke-linejoin="round"/>
<polyline points="715.3,853.1 714.1,864.9 699.9,867.3 695.1,860.2 695.1,872.0 704.6,881.5 707.0,891.0 710.5,895.7 705.8,900.5 701.1,912.3 691.6,910.0 686.8,907.6 692.8,913.5 670.2,914.7 679.7,931.3 718.8,959.7 728.3,952.6 746.1,950.3 804.2,955.0 799.4,1000.0" fill="none" stroke="#1cc8b6" stroke-width="1.9" stroke-linejoin="round"/>
<polyline points="761.5,861.4 760.3,873.2 759.1,888.6 747.3,895.7 744.9,905.2 742.5,928.9 728.3,950.3 718.8,964.5 695.1,1000.0" fill="none" stroke="#1cc8b6" stroke-width="1.9" stroke-linejoin="round"/>
<polyline points="624.0,969.2 635.9,981.1 638.2,987.0 685.6,982.3 704.6,981.1 730.7,1000.0" fill="none" stroke="#1cc8b6" stroke-width="1.9" stroke-linejoin="round"/>
<polyline points="665.5,1000.0 667.9,983.4" fill="none" stroke="#1cc8b6" stroke-width="1.9" stroke-linejoin="round"/>
<polyline points="624.0,862.5 629.9,860.2 628.7,869.7 625.2,886.2" fill="none" stroke="#1cc8b6" stroke-width="1.9" stroke-linejoin="round"/>
<polyline points="938.0,880.9 947.9,874.4 943.1,866.1 1002.4,832.9 982.2,811.6 998.8,793.8 992.9,786.7 994.1,778.4 982.2,765.3 981.0,759.4 976.3,753.5 996.5,746.4 996.9,745.0" fill="none" stroke="#1cc8b6" stroke-width="1.9" stroke-linejoin="round"/>
<polyline points="1002.4,832.9 1040.3,869.7 1073.5,905.2 1106.7,938.4 1120.9,956.2 1116.2,960.9 1135.1,981.1 1142.3,1000.0" fill="none" stroke="#1cc8b6" stroke-width="1.9" stroke-linejoin="round"/>
<polyline points="1002.4,760.6 1004.8,765.3 1016.6,765.3 1087.7,757.0 1097.2,754.7 1173.1,751.1 1180.2,765.3 1211.0,757.0 1208.6,751.1 1225.2,746.4 1224.8,745.0" fill="none" stroke="#1cc8b6" stroke-width="1.9" stroke-linejoin="round"/>
<polyline points="1088.8,741.5 1093.7,754.7" fill="none" stroke="#1cc8b6" stroke-width="1.9" stroke-linejoin="round"/>
<polyline points="1093.7,754.7 1096.0,767.7 1090.1,772.4 1084.2,773.6 1085.4,781.9 1092.5,786.7 1099.6,791.4 1105.5,811.6 1163.6,850.7 1192.0,861.4 1222.9,880.3 1235.9,881.5 1233.5,888.6 1241.8,886.2 1252.0,887.4" fill="none" stroke="#1cc8b6" stroke-width="1.9" stroke-linejoin="round"/>
<polyline points="1163.6,850.7 1150.6,870.8 1158.9,881.5 1158.9,889.8 1144.6,900.5 1134.0,905.2 1125.7,913.5 1106.7,937.2" fill="none" stroke="#1cc8b6" stroke-width="1.9" stroke-linejoin="round"/>
<polyline points="1073.5,905.2 1058.1,911.1 1040.3,931.3 1021.3,950.3 1007.1,966.9 1000.0,969.2 1037.9,1000.0" fill="none" stroke="#1cc8b6" stroke-width="1.9" stroke-linejoin="round"/>
<polyline points="1130.4,1000.0 1142.3,971.6 1161.2,952.6 1184.9,933.7 1208.6,920.6 1245.4,908.8 1244.2,895.7" fill="none" stroke="#1cc8b6" stroke-width="1.9" stroke-linejoin="round"/>
<polyline points="1177.8,936.0 1194.4,962.1 1214.6,983.4 1239.5,968.0 1244.2,982.3 1248.9,1000.0" fill="none" stroke="#1cc8b6" stroke-width="1.9" stroke-linejoin="round"/>
<polyline points="1231.2,744.0 1237.1,755.9 1252.0,758.2" fill="none" stroke="#1cc8b6" stroke-width="1.9" stroke-linejoin="round"/>
<polyline points="1231.2,744.0 1244.2,777.2 1248.9,815.1 1252.0,838.8" fill="none" stroke="#1cc8b6" stroke-width="1.9" stroke-linejoin="round"/>
<polyline points="573.6,746.0 566.7,746.7 558.6,748.8" fill="none" stroke="#1cc8b6" stroke-width="1.9" stroke-linejoin="round"/>
<polyline points="628.0,727.5 643.3,731.7 660.0,733.3 670.0,741.7 676.2,758.2" fill="none" stroke="#1cc8b6" stroke-width="1.9" stroke-linejoin="round"/>
<polygon points="972.2,372.2 983.3,402.2 1001.1,400.0 1013.3,425.6 1030.0,423.3 1032.2,433.3 1093.3,432.2 1096.7,492.2 1082.2,501.1 1094.4,516.7 1100.0,515.6 1105.6,555.6 1050.0,510.0 1024.4,530.0 1016.7,520.0 981.1,536.7 985.6,551.1 1006.7,546.7 1005.6,558.9 988.9,567.8 985.6,578.9 967.8,581.1 962.2,554.4 948.9,553.3 934.4,565.6 915.6,563.3 895.6,543.3 877.8,545.6 870.0,537.8 864.4,505.6 872.2,502.2 870.0,484.4 896.7,468.9 908.9,455.6 924.4,435.6 940.0,411.1 957.8,383.3" fill="rgba(0,150,215,0.62)" stroke="#1ba6e4" stroke-width="1.6"/>
<polyline points="896.7,468.9 917.8,493.3 924.4,504.4 937.8,508.9 953.3,510.0 977.8,502.2 983.3,488.9 1001.1,487.8 1006.7,475.6 1013.3,473.3 1022.2,470.0 1024.4,453.3 1034.4,442.2 1032.2,433.3" fill="none" stroke="#1ba6e4" stroke-width="1.5"/>
<polyline points="1013.3,473.3 1105.6,555.6" fill="none" stroke="#1ba6e4" stroke-width="1.5"/>
<polyline points="918.9,494.4 895.6,542.2" fill="none" stroke="#1ba6e4" stroke-width="1.5"/>
<polyline points="957.8,513.3 965.6,515.6 963.3,555.6" fill="none" stroke="#1ba6e4" stroke-width="1.5"/>
<ellipse cx="989" cy="477" rx="170" ry="158" fill="none" stroke="#e4222b" stroke-width="4.5"/>

</svg>

<div class="abs" style="left:10px;top:8px;width:260px;height:46px;background:#9a9a9a"></div>
<div class="abs" style="left:15px;top:13px;width:250px;height:35px;background:#fff"></div>
<div class="abs" style="left:19px;top:25px;font-size:12px;color:#6b6b6b">Ange en plats</div>
<div class="abs" style="left:1225px;top:480px;width:25px;height:39px;background:#fff"></div>
<svg class="abs" style="left:1230px;top:493px" width="14" height="12" viewBox="0 0 14 12"><path d="M1 6h10M7 1.5l4.5 4.5L7 10.5" fill="none" stroke="#222" stroke-width="2.2"/></svg>
<div class="abs" style="left:0;top:998px;width:1250px;height:2px;background:#e6e6e6"></div>
<div class="abs" style="left:14px;top:917px;width:51px;height:51px;background:#000"></div>
<svg class="abs" style="left:15px;top:918px" width="49" height="49" viewBox="0 0 49 49"><rect width="49" height="49" fill="#e8eaed"/><path d="M0 38L29 0" stroke="#f6c04a" stroke-width="4"/><path d="M0 38L29 0" stroke="#fff" stroke-width="1"/><path d="M11 0q8 8 10 18q4 16 28 22" fill="none" stroke="#8ab4f8" stroke-width="1"/><path d="M0 40q10-2 12 9H0z" fill="#c9dccb"/><path d="M37 0l12 14" stroke="#fff" stroke-width="1.5"/></svg>
<div class="abs" style="left:79px;top:918px;width:49px;height:49px;background:#021828"></div>
<svg class="abs" style="left:79px;top:918px" width="49" height="49" viewBox="0 0 49 49"><g fill="#fff" stroke="#fff"><path d="M1 19h20M28 19h20" stroke-width="2" stroke-linecap="round"/><path d="M10 19v5M39 19v5" stroke-width="2"/><rect x="9" y="22" width="31" height="3" rx="1.5" stroke="none"/><path d="M16 25l-6 13M33 25l6 13" stroke-width="1.8"/><rect x="18" y="26" width="13" height="10" rx="2" stroke="none"/><circle cx="24.5" cy="31" r="2.5" fill="#021828" stroke="none"/></g></svg>
<div class="abs" style="left:143px;top:927px;width:40px;height:40px;background:#021828"></div>
<svg class="abs" style="left:143px;top:927px" width="40" height="40" viewBox="0 0 40 40"><circle cx="20" cy="10" r="5" fill="#f9b82b"/><path d="M14 16h12l4 10-2 1-2-5v14h-2.5v-9h-1v9H17V22l-2 5-2-1z" fill="#f9b82b"/><path d="M17 16h6l-3 5z" fill="#e0761f"/></svg>
<div class="abs" style="left:10px;top:973px;font-size:17px;color:#fff;letter-spacing:0">Google</div>
<div class="abs" style="left:857px;top:947px;width:40px;height:40px;background:#151515"></div>
<div class="abs" style="left:860px;top:949px;width:34px;height:34px;background:#021828"></div>
<div class="abs" style="left:869px;top:964px;width:15px;height:4px;background:#fff"></div>
<div class="abs" style="left:906px;top:947px;width:40px;height:40px;background:#151515"></div>
<div class="abs" style="left:909px;top:949px;width:34px;height:34px;background:#021828"></div>
<svg class="abs" style="left:916px;top:956px" width="20" height="20" viewBox="0 0 20 20"><circle cx="10" cy="10" r="6.8" fill="none" stroke="#eee" stroke-width="1.5"/><path d="M10 3.5v3M10 13.5v3M3.5 10h3M13.5 10h3" stroke="#eee" stroke-width="1.5"/></svg>
<div class="abs" style="left:955px;top:947px;width:40px;height:40px;background:#151515"></div>
<div class="abs" style="left:958px;top:949px;width:34px;height:34px;background:#021828"></div>
<svg class="abs" style="left:966px;top:957px" width="18" height="18" viewBox="0 0 18 18"><path d="M10 2l6 6-2 1-3 3 .5 3-1.5 1-3-3-5 5-1-1 5-5-3-3 1-1.5 3 .5 3-3z" fill="#fff"/></svg>
<div class="abs" style="left:1004px;top:947px;width:40px;height:40px;background:#151515"></div>
<div class="abs" style="left:1007px;top:949px;width:34px;height:34px;background:#021828"></div>
<div class="abs" style="left:1016px;top:964px;width:16px;height:4px;background:#fff"></div>
<div class="abs" style="left:1022px;top:958px;width:4px;height:16px;background:#fff"></div>

</div>
<div id="panel">
<div class="abs" style="left:0;top:0;width:650px;height:130px;background:#f0f0f0;border-bottom:1px solid #d6d6d6"></div>
<div class="abs" style="left:635px;top:0;width:15px;height:1000px;background:#f8f8f8"></div>
<div class="abs" style="left:0;top:0;width:1px;height:1000px;background:#dcdcdc"></div>
<svg class="abs" style="left:637px;top:2px" width="11" height="10" viewBox="0 0 11 10"><path d="M1 8h9L5.5 2z" fill="#a3a3a3"/></svg>
<div class="abs" style="left:638px;top:12px;width:9px;height:828px;background:#8f8f8f;border-radius:5px"></div>
<svg class="abs" style="left:637px;top:986px" width="11" height="10" viewBox="0 0 11 10"><path d="M1 2h9L5.5 8z" fill="#a3a3a3"/></svg>
<div class="abs" style="left:468px;top:12px;width:18px;height:18px;background:#fff;border:1px solid #ccc"></div>
<svg class="abs" style="left:470px;top:14px" width="14" height="14" viewBox="0 0 14 14"><path d="M2 7.5l3.2 3.2L12 3" fill="none" stroke="#1530b0" stroke-width="2.4"/></svg>
<div class="abs" style="left:493px;top:16px;font-size:11.6px;color:#444">Tillåt val av flera områden</div>
<div class="abs" style="left:10px;top:26px;width:613px;line-height:30px;font-size:23px;color:#7a7a7a;font-weight:normal;letter-spacing:0.25px">Olivedal Järntorget, Vasastaden västra, Heden västra,<br>Inom Vallgraven, Haga</div>
<div class="abs" style="left:1px;top:28px;width:618px;height:65px;border:5px solid #ed1c24"></div>
<div class="abs" style="left:15px;top:95px;width:84px;height:36px;background:#fff;border:1px solid #d6d6d6;border-bottom:none;border-top:3px solid #2b4a8a"></div>
<div class="abs" style="left:34px;top:109px;font-size:11.2px;color:#333;font-weight:bold">Bostäder</div>
<div class="abs" style="left:119px;top:109px;font-size:11.2px;color:#1a3bb8;font-weight:bold">Lokaler</div>
<!-- cards -->
<div class="abs card" style="left:23px;top:164px;width:192px;height:103px"></div>
<div class="abs card" style="left:220px;top:164px;width:194px;height:103px"></div>
<div class="abs card" style="left:420px;top:164px;width:192px;height:103px"></div>
<div class="abs ct" style="left:29px;top:176px">Medelhyra</div>
<div class="abs ct" style="left:227px;top:176px">Antal fastigheter</div>
<div class="abs ct" style="left:426px;top:176px">Fastigheter exkl. Brf</div>
<div class="abs" style="left:29px;top:204px;width:180px;height:1px;background:#c8c8c8"></div>
<div class="abs" style="left:227px;top:204px;width:181px;height:1px;background:#c8c8c8"></div>
<div class="abs" style="left:426px;top:204px;width:181px;height:1px;background:#c8c8c8"></div>
<div class="abs cv" style="left:29px;top:224px;width:136px;text-align:right">1 525</div>
<div class="abs" style="left:172px;top:240px;font-size:10px;color:#333">SEK/m²</div>
<div class="abs cv" style="left:227px;top:224px;width:172px;text-align:right">463</div>
<div class="abs cv" style="left:426px;top:224px;width:172px;text-align:right">254</div>
<!-- chart -->
<div class="abs" style="left:20px;top:284px;font-size:21px;color:#555;letter-spacing:-0.6px">Kalkylerad hyra</div>
<div class="abs" style="left:20px;top:313px;width:595px;height:1px;background:#c8c8c8"></div>
<div class="abs" style="left:460px;top:325px;width:155px;text-align:right;font-size:11px;color:#333"><span style="border-bottom:1px dashed #555">Hur räknas grafen fram?</span></div>
<svg class="abs" style="left:0;top:0" width="650" height="760" viewBox="1270 80 650 760">
<rect x="1302" y="426.5" width="25" height="14" fill="#00bfa5"/>
<text x="1333" y="438.0" font-size="13" fill="#333" font-family="Liberation Sans">-1940</text>
<rect x="1375.5" y="426.5" width="25" height="14" fill="#3949ab"/>
<text x="1406.5" y="438.0" font-size="13" fill="#333" font-family="Liberation Sans">1941-1960</text>
<rect x="1477" y="426.5" width="25" height="14" fill="#ff6b6b"/>
<text x="1508" y="438.0" font-size="13" fill="#333" font-family="Liberation Sans">1961-1980</text>
<rect x="1578.5" y="426.5" width="25" height="14" fill="#6ab04c"/>
<text x="1609.5" y="438.0" font-size="13" fill="#333" font-family="Liberation Sans">1981-2000</text>
<rect x="1680" y="426.5" width="25" height="14" fill="#8e44ad"/>
<text x="1711" y="438.0" font-size="13" fill="#333" font-family="Liberation Sans">2001-2010</text>
<rect x="1781.5" y="426.5" width="25" height="14" fill="#e67e22"/>
<text x="1812.5" y="438.0" font-size="13" fill="#333" font-family="Liberation Sans">2011-2020</text>
<rect x="1302" y="450.5" width="25" height="14" fill="#cc3d00"/>
<text x="1333" y="462.0" font-size="13" fill="#333" font-family="Liberation Sans">2021-</text>
<text x="1553.4" y="495" font-size="12.5" fill="#333" text-anchor="middle" font-family="Liberation Sans">Prognos</text>
<line x1="1350" x2="1825.5" y1="673.2" y2="673.2" stroke="#e3e7f0" stroke-width="1"/>
<line x1="1350" x2="1825.5" y1="630.4" y2="630.4" stroke="#e3e7f0" stroke-width="1"/>
<line x1="1350" x2="1825.5" y1="587.6" y2="587.6" stroke="#e3e7f0" stroke-width="1"/>
<line x1="1350" x2="1825.5" y1="544.8" y2="544.8" stroke="#e3e7f0" stroke-width="1"/>
<line x1="1350" x2="1825.5" y1="502.0" y2="502.0" stroke="#e3e7f0" stroke-width="1"/>
<text x="1342" y="720.5" font-size="12" fill="#555" text-anchor="end" font-family="Liberation Sans">0</text>
<text x="1342" y="677.7" font-size="12" fill="#555" text-anchor="end" font-family="Liberation Sans">500</text>
<text x="1342" y="634.9" font-size="12" fill="#555" text-anchor="end" font-family="Liberation Sans">1,000</text>
<text x="1342" y="592.1" font-size="12" fill="#555" text-anchor="end" font-family="Liberation Sans">1,500</text>
<text x="1342" y="549.3" font-size="12" fill="#555" text-anchor="end" font-family="Liberation Sans">2,000</text>
<text x="1342" y="506.5" font-size="12" fill="#555" text-anchor="end" font-family="Liberation Sans">2,500</text>
<line x1="1350" x2="1826" y1="717.5" y2="717.5" stroke="#6e7280" stroke-width="1"/>
<line x1="1553.5" x2="1553.5" y1="500" y2="716" stroke="#ccc" stroke-width="1" stroke-dasharray="4,3"/>
<line x1="1350.4" x2="1350.4" y1="717" y2="723" stroke="#6e7280" stroke-width="1"/>
<text transform="translate(1351.4,728) rotate(-45)" font-size="12.5" fill="#555" text-anchor="end" font-family="Liberation Sans">2011</text>
<line x1="1418.2" x2="1418.2" y1="717" y2="723" stroke="#6e7280" stroke-width="1"/>
<text transform="translate(1419.2,728) rotate(-45)" font-size="12.5" fill="#555" text-anchor="end" font-family="Liberation Sans">2014</text>
<line x1="1486.1" x2="1486.1" y1="717" y2="723" stroke="#6e7280" stroke-width="1"/>
<text transform="translate(1487.1,728) rotate(-45)" font-size="12.5" fill="#555" text-anchor="end" font-family="Liberation Sans">2017</text>
<line x1="1553.9" x2="1553.9" y1="717" y2="723" stroke="#6e7280" stroke-width="1"/>
<text transform="translate(1554.9,728) rotate(-45)" font-size="12.5" fill="#555" text-anchor="end" font-family="Liberation Sans">2020</text>
<line x1="1621.8" x2="1621.8" y1="717" y2="723" stroke="#6e7280" stroke-width="1"/>
<text transform="translate(1622.8,728) rotate(-45)" font-size="12.5" fill="#555" text-anchor="end" font-family="Liberation Sans">2021</text>
<line x1="1689.6" x2="1689.6" y1="717" y2="723" stroke="#6e7280" stroke-width="1"/>
<text transform="translate(1690.6,728) rotate(-45)" font-size="12.5" fill="#555" text-anchor="end" font-family="Liberation Sans">2022</text>
<line x1="1757.5" x2="1757.5" y1="717" y2="723" stroke="#6e7280" stroke-width="1"/>
<text transform="translate(1758.5,728) rotate(-45)" font-size="12.5" fill="#555" text-anchor="end" font-family="Liberation Sans">2023</text>
<line x1="1825.3" x2="1825.3" y1="717" y2="723" stroke="#6e7280" stroke-width="1"/>
<text transform="translate(1826.3,728) rotate(-45)" font-size="12.5" fill="#555" text-anchor="end" font-family="Liberation Sans">2024</text>
<polyline fill="none" stroke="#00bfa5" stroke-width="2" points="1350.4,621.9 1418.2,616.0 1486.1,611.5 1553.9,604.8"/>
<polyline fill="none" stroke="#00bfa5" stroke-width="2" stroke-dasharray="8,6" points="1553.9,604.8 1621.8,602.0 1689.6,600.8 1757.5,596.0 1825.3,589.3"/>
<circle cx="1350.4" cy="621.9" r="3.6" fill="#00bfa5"/>
<circle cx="1418.2" cy="616.0" r="3.6" fill="#00bfa5"/>
<circle cx="1486.1" cy="611.5" r="3.6" fill="#00bfa5"/>
<circle cx="1553.9" cy="604.8" r="3.6" fill="#00bfa5"/>
<circle cx="1621.8" cy="602.0" r="3.6" fill="#00bfa5"/>
<circle cx="1689.6" cy="600.8" r="3.6" fill="#00bfa5"/>
<circle cx="1757.5" cy="596.0" r="3.6" fill="#00bfa5"/>
<circle cx="1825.3" cy="589.3" r="3.6" fill="#00bfa5"/>
<polyline fill="none" stroke="#3949ab" stroke-width="2" points="1350.4,621.0 1418.2,614.7 1486.1,601.6 1553.9,595.6"/>
<polyline fill="none" stroke="#3949ab" stroke-width="2" stroke-dasharray="8,6" points="1553.9,595.6 1621.8,592.0 1689.6,590.4 1757.5,585.3 1825.3,578.5"/>
<circle cx="1350.4" cy="621.0" r="3.6" fill="#3949ab"/>
<circle cx="1418.2" cy="614.7" r="3.6" fill="#3949ab"/>
<circle cx="1486.1" cy="601.6" r="3.6" fill="#3949ab"/>
<circle cx="1553.9" cy="595.6" r="3.6" fill="#3949ab"/>
<circle cx="1621.8" cy="592.0" r="3.6" fill="#3949ab"/>
<circle cx="1689.6" cy="590.4" r="3.6" fill="#3949ab"/>
<circle cx="1757.5" cy="585.3" r="3.6" fill="#3949ab"/>
<circle cx="1825.3" cy="578.5" r="3.6" fill="#3949ab"/>
<polyline fill="none" stroke="#ff6b6b" stroke-width="2" points="1350.4,625.0 1418.2,620.0 1486.1,616.7 1553.9,611.5"/>
<polyline fill="none" stroke="#ff6b6b" stroke-width="2" stroke-dasharray="8,6" points="1553.9,611.5 1621.8,609.0 1689.6,608.0 1757.5,603.2 1825.3,597.6"/>
<circle cx="1350.4" cy="625.0" r="3.6" fill="#ff6b6b"/>
<circle cx="1418.2" cy="620.0" r="3.6" fill="#ff6b6b"/>
<circle cx="1486.1" cy="616.7" r="3.6" fill="#ff6b6b"/>
<circle cx="1553.9" cy="611.5" r="3.6" fill="#ff6b6b"/>
<circle cx="1621.8" cy="609.0" r="3.6" fill="#ff6b6b"/>
<circle cx="1689.6" cy="608.0" r="3.6" fill="#ff6b6b"/>
<circle cx="1757.5" cy="603.2" r="3.6" fill="#ff6b6b"/>
<circle cx="1825.3" cy="597.6" r="3.6" fill="#ff6b6b"/>
<polyline fill="none" stroke="#6ab04c" stroke-width="2" points="1350.4,617.6 1418.2,608.4 1486.1,605.6 1553.9,600.0"/>
<polyline fill="none" stroke="#6ab04c" stroke-width="2" stroke-dasharray="8,6" points="1553.9,600.0 1621.8,596.8 1689.6,594.4 1757.5,589.7 1825.3,582.9"/>
<circle cx="1350.4" cy="617.6" r="3.6" fill="#6ab04c"/>
<circle cx="1418.2" cy="608.4" r="3.6" fill="#6ab04c"/>
<circle cx="1486.1" cy="605.6" r="3.6" fill="#6ab04c"/>
<circle cx="1553.9" cy="600.0" r="3.6" fill="#6ab04c"/>
<circle cx="1621.8" cy="596.8" r="3.6" fill="#6ab04c"/>
<circle cx="1689.6" cy="594.4" r="3.6" fill="#6ab04c"/>
<circle cx="1757.5" cy="589.7" r="3.6" fill="#6ab04c"/>
<circle cx="1825.3" cy="582.9" r="3.6" fill="#6ab04c"/>
<polyline fill="none" stroke="#8e44ad" stroke-width="2" points="1350.4,584.0 1418.2,574.5 1486.1,575.4 1553.9,567.8"/>
<polyline fill="none" stroke="#8e44ad" stroke-width="2" stroke-dasharray="8,6" points="1553.9,567.8 1621.8,564.7 1689.6,561.8 1757.5,555.8 1825.3,547.5"/>
<circle cx="1350.4" cy="584.0" r="3.6" fill="#8e44ad"/>
<circle cx="1418.2" cy="574.5" r="3.6" fill="#8e44ad"/>
<circle cx="1486.1" cy="575.4" r="3.6" fill="#8e44ad"/>
<circle cx="1553.9" cy="567.8" r="3.6" fill="#8e44ad"/>
<circle cx="1621.8" cy="564.7" r="3.6" fill="#8e44ad"/>
<circle cx="1689.6" cy="561.8" r="3.6" fill="#8e44ad"/>
<circle cx="1757.5" cy="555.8" r="3.6" fill="#8e44ad"/>
<circle cx="1825.3" cy="547.5" r="3.6" fill="#8e44ad"/>
<polyline fill="none" stroke="#e67e22" stroke-width="2" points="1486.1,554.2 1553.9,545.9"/>
<polyline fill="none" stroke="#e67e22" stroke-width="2" stroke-dasharray="8,6" points="1553.9,545.9 1621.8,542.7 1689.6,541.0 1757.5,535.6 1825.3,529.0"/>
<circle cx="1486.1" cy="554.2" r="3.6" fill="#e67e22"/>
<circle cx="1553.9" cy="545.9" r="3.6" fill="#e67e22"/>
<circle cx="1621.8" cy="542.7" r="3.6" fill="#e67e22"/>
<circle cx="1689.6" cy="541.0" r="3.6" fill="#e67e22"/>
<circle cx="1757.5" cy="535.6" r="3.6" fill="#e67e22"/>
<circle cx="1825.3" cy="529.0" r="3.6" fill="#e67e22"/>
<polyline fill="none" stroke="#cc3d00" stroke-width="2" stroke-dasharray="8,6" points="1553.9,541.0 1621.8,540.3 1689.6,541.0 1757.5,538.0 1825.3,532.0"/>
<circle cx="1553.9" cy="541.0" r="3.6" fill="#cc3d00"/>
<circle cx="1621.8" cy="540.3" r="3.6" fill="#cc3d00"/>
<circle cx="1689.6" cy="541.0" r="3.6" fill="#cc3d00"/>
<circle cx="1757.5" cy="538.0" r="3.6" fill="#cc3d00"/>
<circle cx="1825.3" cy="532.0" r="3.6" fill="#cc3d00"/>
</svg>
<svg class="abs" style="left:0;top:690px" width="650" height="60" viewBox="1270 770 650 60">
<rect x="1315" y="783.5" width="551" height="7" fill="#dfe5ef"/>
<rect x="1315" y="790" width="551" height="30" fill="#e8eefb"/>
<path d="M1315 813 L1393 812.5 L1553 797 L1865 795 L1865 820 L1315 820z" fill="#d5e1f7" stroke="#a9c1ef" stroke-width="1"/>
<rect x="1311.5" y="795" width="7" height="19" rx="2" fill="#fff" stroke="#aaa"/>
<rect x="1861.5" y="795" width="7" height="19" rx="2" fill="#fff" stroke="#aaa"/>
<path d="M1588 785v4M1590 785v4M1592 785v4" stroke="#fff" stroke-width="1"/>
</svg>
<!-- section 3 -->
<div class="abs" style="left:20px;top:760px;font-size:20px;color:#555;letter-spacing:-0.8px">Lägenhetsfördelning</div>
<div class="abs" style="left:20px;top:787px;width:208px;height:1px;background:#c8c8c8"></div>
<div class="abs th" style="left:250px;top:765px">Byggårsintervall</div>
<div class="abs th" style="left:348px;top:765px">Observerade hyror</div>
<div class="abs th" style="left:480px;top:765px;width:133px;text-align:right">Kalkylerad hyra (SEK/m²)</div>
<div class="abs" style="left:250px;top:787px;width:363px;height:1px;background:#c8c8c8"></div>
<div class="abs" style="left:239px;top:793px;width:1px;height:207px;background:#c8c8c8"></div>
<div class="abs td" style="left:250px;top:806px;width:59px;text-align:right">-1940</div>
<div class="abs td" style="left:354px;top:806px">382</div>
<div class="abs td" style="left:500px;top:806px;width:107px;text-align:right">1 490</div>
<div class="abs td" style="left:254px;top:833px">1941-1960</div>
<div class="abs td" style="left:354px;top:833px">12</div>
<div class="abs td" style="left:500px;top:833px;width:107px;text-align:right">1 617</div>
<div class="abs td" style="left:254px;top:859px">1961-1980</div>
<div class="abs td" style="left:354px;top:859px">16</div>
<div class="abs td" style="left:500px;top:859px;width:107px;text-align:right">1 395</div>
<div class="abs td" style="left:254px;top:886px">1981-2000</div>
<div class="abs td" style="left:354px;top:886px">49</div>
<div class="abs td" style="left:500px;top:886px;width:107px;text-align:right">1 566</div>
<div class="abs td" style="left:254px;top:912px">2001-2010</div>
<div class="abs td" style="left:354px;top:912px">5</div>
<div class="abs td" style="left:500px;top:912px;width:107px;text-align:right">1 978</div>
<div class="abs td" style="left:254px;top:938px">2011-2020</div>
<div class="abs td" style="left:354px;top:938px">1</div>
<div class="abs td" style="left:500px;top:938px;width:107px;text-align:right">2 186</div>
<div class="abs td" style="left:254px;top:965px">2021-</div>
<div class="abs td" style="left:354px;top:965px">4</div>
<div class="abs td" style="left:500px;top:965px;width:107px;text-align:right">2 157</div>
<svg class="abs" style="left:0;top:0" width="650" height="1000">
<path d="M124.30 839.50 A60.2 60.2 0 0 1 172.82 864.06 L139.85 888.27 A19.3 19.3 0 0 0 124.30 880.40z" fill="#d35400"/>
<path d="M172.82 864.06 A60.2 60.2 0 0 1 122.20 959.86 L123.63 918.99 A19.3 19.3 0 0 0 139.85 888.27z" fill="#3498db"/>
<path d="M122.20 959.86 A60.2 60.2 0 0 1 66.02 884.63 L105.61 894.87 A19.3 19.3 0 0 0 123.63 918.99z" fill="#2ecc71"/>
<path d="M66.02 884.63 A60.2 60.2 0 0 1 98.86 845.14 L116.14 882.21 A19.3 19.3 0 0 0 105.61 894.87z" fill="#c93c00"/>
<path d="M98.86 845.14 A60.2 60.2 0 0 1 117.90 839.84 L122.25 880.51 A19.3 19.3 0 0 0 116.14 882.21z" fill="#e67e22"/>
<path d="M117.90 839.84 A60.2 60.2 0 0 1 122.20 839.54 L123.63 880.41 A19.3 19.3 0 0 0 122.25 880.51z" fill="#8e44ad"/>
<path d="M122.20 839.54 A60.2 60.2 0 0 1 123.67 839.50 L124.10 880.40 A19.3 19.3 0 0 0 123.63 880.41z" fill="#27ae60"/>
<path d="M123.67 839.50 A60.2 60.2 0 0 1 124.30 839.50 L124.30 880.40 A19.3 19.3 0 0 0 124.10 880.40z" fill="#d35400"/>
</svg>

</div>
<svg class="abs" style="left:1790px;top:16px;z-index:10" width="66" height="74" viewBox="1790 16 66 74"><path d="M1810 23.5h26v28.5h12.5L1823 82.5 1797.5 52H1810z" fill="none" stroke="#ed1c24" stroke-width="5" stroke-linejoin="miter"/></svg>
</body></html>
